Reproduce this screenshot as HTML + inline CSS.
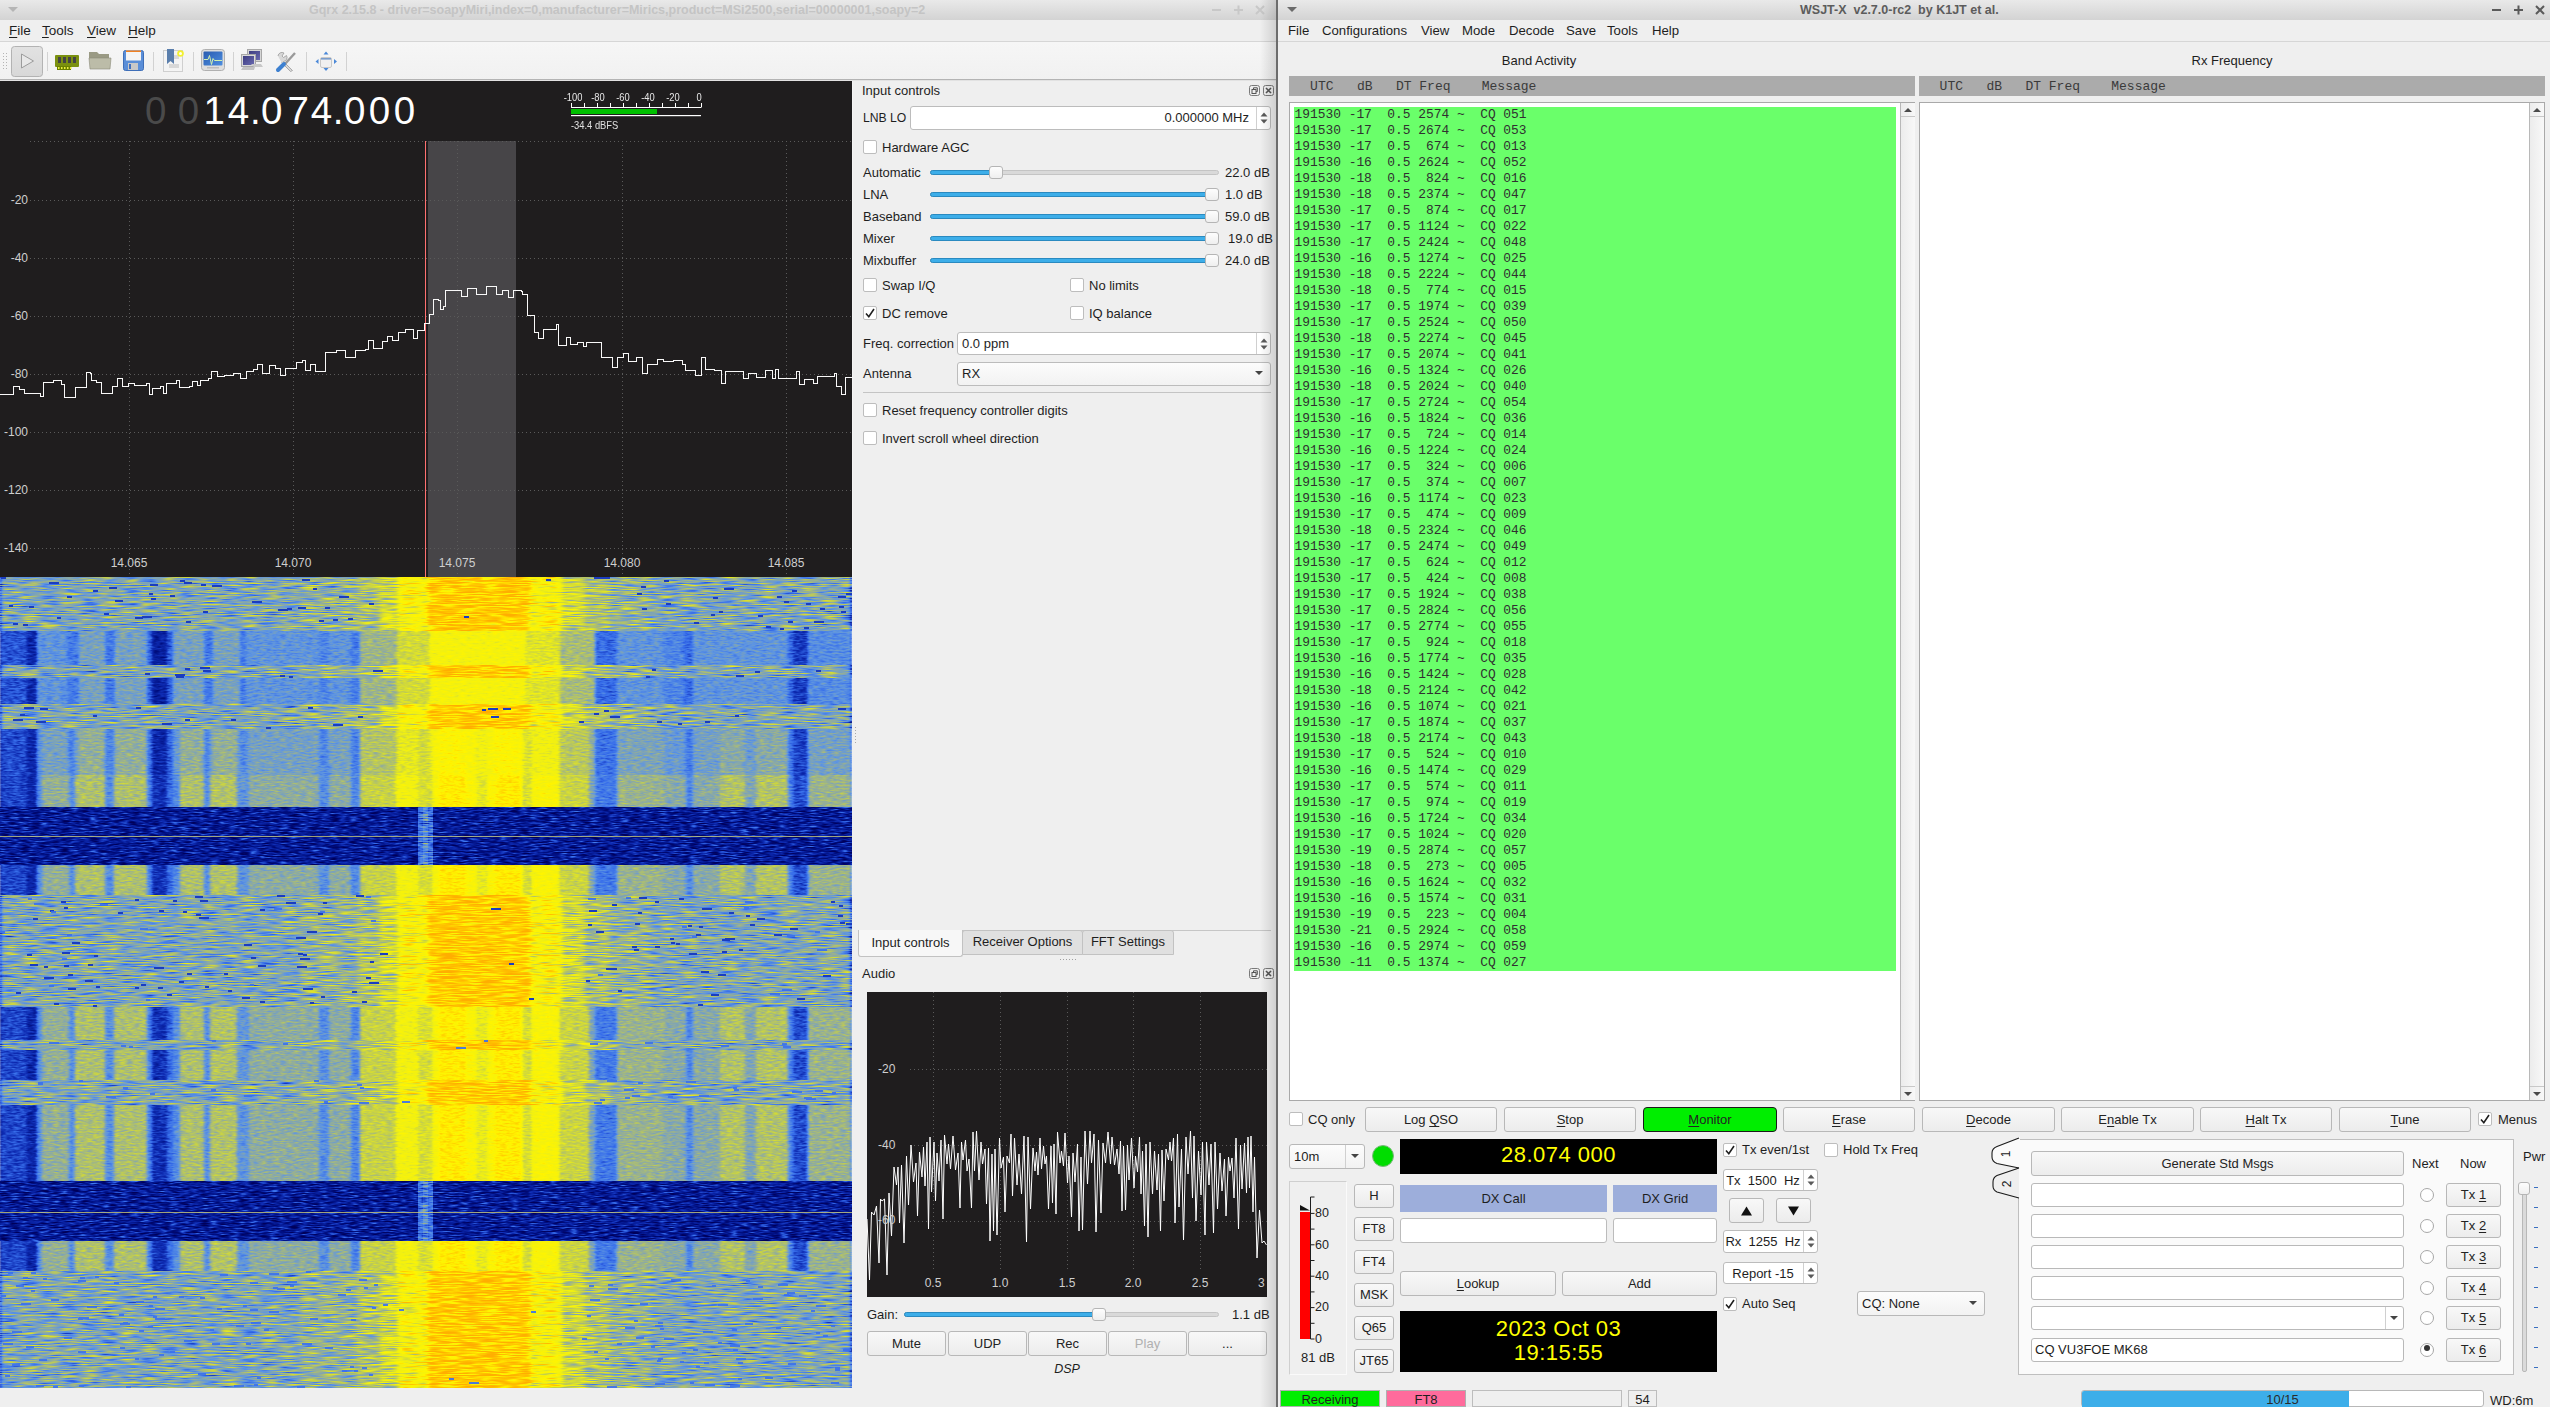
<!DOCTYPE html><html><head><meta charset="utf-8"><style>
*{margin:0;padding:0;box-sizing:border-box}
html,body{width:2550px;height:1407px;overflow:hidden;background:#efefef;position:relative;
font-family:"Liberation Sans",sans-serif;font-size:13px;color:#1e1e1e}
.a{position:absolute}
.t{position:absolute;white-space:pre;line-height:1}
.btn{position:absolute;border:1px solid #b8b8b8;border-radius:3px;background:linear-gradient(#f8f8f8,#ececec);
 text-align:center;white-space:pre;color:#232323}
.inp{position:absolute;border:1px solid #bcbcbc;border-radius:3px;background:#fff}
.cb{position:absolute;width:14px;height:14px;border:1px solid #bdbdbd;border-radius:2px;background:#fff}
.mono{font-family:"Liberation Mono",monospace}
</style></head><body><div class="a" style="left:0px;top:0px;width:1276px;height:20px;background:linear-gradient(#e9e9e9,#d3d3d3)"></div><svg class="a" style="left:7px;top:6px" width="12" height="8"><path d="M1 1h10l-5 5z" fill="#b5b5b5"/></svg><div class="t" style="left:309px;top:4px;font-size:12.5px;font-weight:bold;color:#c4c4c4">Gqrx 2.15.8 - driver=soapyMiri,index=0,manufacturer=Mirics,product=MSi2500,serial=00000001,soapy=2</div><svg class="a" style="left:1208px;top:3px" width="66" height="14"><path d="M4 7h9" stroke="#c8c8c8" stroke-width="2"/><path d="M26 7h9M30.5 2.5v9" stroke="#c8c8c8" stroke-width="2"/><path d="M48 3l8 8M56 3l-8 8" stroke="#c8c8c8" stroke-width="2"/></svg><div class="a" style="left:0px;top:20px;width:1276px;height:21px;background:#efefef"></div><div class="a" style="left:0px;top:41px;width:1276px;height:1px;background:#d6d6d6"></div><div class="t" style="left:9px;top:24px;font-size:13.5px"><u style="text-decoration-thickness:1px;text-underline-offset:2px">F</u>ile</div><div class="t" style="left:42px;top:24px;font-size:13.5px"><u style="text-decoration-thickness:1px;text-underline-offset:2px">T</u>ools</div><div class="t" style="left:87px;top:24px;font-size:13.5px"><u style="text-decoration-thickness:1px;text-underline-offset:2px">V</u>iew</div><div class="t" style="left:128px;top:24px;font-size:13.5px"><u style="text-decoration-thickness:1px;text-underline-offset:2px">H</u>elp</div><div class="a" style="left:0px;top:42px;width:1276px;height:38px;background:linear-gradient(#f6f6f6,#f1f1f1)"></div><div class="a" style="left:0px;top:79px;width:1276px;height:1px;background:#b4b4b4"></div><div class="a" style="left:0px;top:80px;width:1276px;height:1px;background:#e2e2e2"></div><svg class="a" style="left:0;top:42px" width="360" height="38" viewBox="0 42 360 38">
<defs>
<linearGradient id="gPlay" x1="0" y1="0" x2="0" y2="1"><stop offset="0" stop-color="#e2e2e2"/><stop offset="1" stop-color="#d8d8d8"/></linearGradient>
<linearGradient id="gScr" x1="0" y1="0" x2="1" y2="1"><stop offset="0" stop-color="#2a5cb0"/><stop offset="1" stop-color="#4d8ee0"/></linearGradient>
<linearGradient id="gScr2" x1="0" y1="0" x2="1" y2="1"><stop offset="0" stop-color="#3c3c80"/><stop offset="1" stop-color="#6a6ab0"/></linearGradient>
</defs>
<g fill="#b4b4b4"><rect x="3" y="53" width="1" height="1"/><rect x="3" y="56" width="1" height="1"/><rect x="3" y="59" width="1" height="1"/><rect x="3" y="62" width="1" height="1"/><rect x="3" y="65" width="1" height="1"/><rect x="3" y="68" width="1" height="1"/><rect x="6" y="53" width="1" height="1"/><rect x="6" y="56" width="1" height="1"/><rect x="6" y="59" width="1" height="1"/><rect x="6" y="62" width="1" height="1"/><rect x="6" y="65" width="1" height="1"/><rect x="6" y="68" width="1" height="1"/></g>
<rect x="11.5" y="46.5" width="31" height="30" rx="3" fill="url(#gPlay)" stroke="#b3b3b3"/>
<path d="M21.5 54v14l12-7z" fill="#e8e8e8" stroke="#9c9c9c" stroke-width="1"/>
<g fill="#d2d2d2"><rect x="47" y="52" width="1" height="19"/><rect x="153" y="52" width="1" height="19"/><rect x="193" y="52" width="1" height="19"/><rect x="233" y="52" width="1" height="19"/><rect x="306" y="52" width="1" height="19"/><rect x="346" y="52" width="1" height="19"/></g>
<rect x="55" y="55" width="24" height="12" rx="1" fill="#7a9010"/>
<rect x="57" y="66" width="14" height="4" fill="#6a8000"/>
<g fill="#444"><rect x="58" y="57" width="3" height="6"/><rect x="63" y="57" width="3" height="6"/><rect x="68" y="57" width="3" height="6"/><rect x="73" y="57" width="3" height="6"/></g>
<g fill="#e8f040"><rect x="58" y="67" width="1.5" height="2"/><rect x="61" y="67" width="1.5" height="2"/><rect x="64" y="67" width="1.5" height="2"/><rect x="67" y="67" width="1.5" height="2"/><rect x="70" y="67" width="1.5" height="2"/></g>
<path d="M89 52h8l2 2h10v6h-20z" fill="#9a9a84"/>
<path d="M89 58h22l-1 11h-20z" fill="#bcbca8" stroke="#8a8a78" stroke-width=".6"/>
<rect x="123.5" y="50.5" width="20" height="20" rx="2" fill="#5a8ed8" stroke="#3f6fb8"/>
<rect x="126" y="50.5" width="15" height="10" fill="#f4f4f4"/>
<rect x="126" y="50.5" width="15" height="1.5" fill="#f08020"/>
<rect x="128" y="63" width="10" height="7" fill="#c8c8c8"/><rect x="129" y="64" width="2" height="5" fill="#4070c0"/>
<rect x="163.5" y="50.5" width="19" height="21" fill="#f4f4f4" stroke="#cfcfcf"/>
<rect x="170" y="55" width="9" height="4" fill="#d8d8d8"/><rect x="169" y="64" width="10" height="4" fill="#d8d8d8"/>
<path d="M167 49h7v15l-3.5-3-3.5 3z" fill="#5a7eac"/>
<circle cx="180.5" cy="53.5" r="3.3" fill="#f2f030"/><circle cx="180.5" cy="53.5" r="1.5" fill="#fffff0"/>
<rect x="201.5" y="49.5" width="23" height="21" rx="3" fill="#dedede" stroke="#b0b0b0"/>
<rect x="203.5" y="51.5" width="19" height="14" rx="1" fill="url(#gScr)"/>
<path d="M204 59.5h4l1.5-4 2 9 1.5-6 1.5 2h7.5" fill="none" stroke="#d0f0b0" stroke-width="1"/>
<rect x="207" y="67" width="12" height="1.5" fill="#bdbdbd"/>
<rect x="247.5" y="49.5" width="14" height="12" fill="#d6d6d6" stroke="#a8a8a8"/><rect x="249" y="51" width="11" height="9" fill="url(#gScr2)"/>
<rect x="241.5" y="54.5" width="14" height="12" fill="#dadada" stroke="#a8a8a8"/><rect x="243" y="56" width="11" height="9" fill="url(#gScr2)"/>
<path d="M241 70l2-3h12l-1 3z" fill="#c4c4c4"/><path d="M251 64h10l2 3h-9z" fill="#c8c8c8"/>
<path d="M278 56a4 4 0 0 1 6-3l-2 3 1.5 1.5 3-2a4 4 0 0 1-3 6l9 9-2 1-9-9" fill="#d8d8d8" stroke="#9a9a9a" stroke-width=".8"/>
<path d="M295 53l-10 11" stroke="#9a9a9a" stroke-width="2.4"/>
<path d="M284 64l-6 6" stroke="#3d80d0" stroke-width="4" stroke-linecap="round"/>
<rect x="320.5" y="57.5" width="11" height="10" rx="1.5" fill="#f0f0f0" stroke="#c8c8c8"/><rect x="321" y="58" width="10" height="1.6" fill="#7a9ccc"/>
<g fill="#4a88d8"><path d="M326 51.5l2.5 3h-5z"/><path d="M326 71l2.5-3h-5z"/><path d="M315.5 61.5l3-2.5v5z"/><path d="M337 61.5l-3-2.5v5z"/></g>
</svg><div class="a" style="left:0px;top:81px;width:852px;height:496px;background:#1f1d1e"></div><div class="a" style="left:852px;top:81px;width:1px;height:496px;background:#f4f4f4"></div><svg class="a" style="left:0;top:81px" width="852" height="496" viewBox="0 81 852 496"><rect x="428" y="141" width="88" height="436" fill="#474548"/><path d="M30 141.5H852M30 200.5H852M30 258.5H852M30 316.5H852M30 374.5H852M30 432.5H852M30 490.5H852M30 548.5H852M129.5 141V577M293.5 141V577M457.5 141V577M622.5 141V577M786.5 141V577" stroke="#5a5a5a" stroke-width="1" stroke-dasharray="1 3" fill="none"/><rect x="425" y="141" width="1" height="436" fill="#ff7070"/><path d="M0 394.5H10.5V394.5H13.5V386.5H19.5V389.5H24.5V393.5H35.5V393.5H40.5V396.5H43.5V382.5H53.5V380.5H61.5V384.5H64.5V397.5H74.5V397.5H75.5V387.5H83.5V387.5H86.5V372.5H90.5V373.5H91.5V380.5H96.5V382.5H101.5V393.5H109.5V393.5H112.5V386.5H117.5V378.5H122.5V386.5H128.5V383.5H134.5V385.5H141.5V385.5H146.5V383.5H149.5V394.5H152.5V388.5H160.5V386.5H163.5V393.5H166.5V383.5H176.5V380.5H179.5V387.5H189.5V386.5H192.5V381.5H197.5V385.5H200.5V380.5H208.5V378.5H211.5V371.5H217.5V376.5H224.5V375.5H233.5V373.5H240.5V378.5H246.5V371.5H253.5V369.5H257.5V364.5H262.5V373.5H269.5V365.5H275.5V368.5H280.5V375.5H285.5V368.5H291.5V368.5H296.5V362.5H302.5V360.5H305.5V370.5H310.5V364.5H315.5V371.5H323.5V371.5H325.5V352.5H336.5V350.5H345.5V357.5H355.5V350.5H365.5V349.5H368.5V340.5H373.5V348.5H377.5V348.5H382.5V341.5H387.5V336.5H392.5V340.5H398.5V332.5H405.5V329.5H413.5V338.5H417.5V330.5H424.5V323.5H429.5V314.5H433.5V299.5H438.5V300.5H440.5V309.5H443.5V306.5H445.5V290.5H454.5V290.5H461.5V296.5H467.5V288.5H476.5V294.5H486.5V286.5H496.5V294.5H502.5V290.5H508.5V297.5H513.5V290.5H521.5V291.5H522.5V294.5H527.5V315.5H534.5V332.5H538.5V338.5H543.5V329.5H556.5V324.5H558.5V345.5H566.5V337.5H570.5V344.5H577.5V342.5H583.5V346.5H586.5V342.5H599.5V342.5H601.5V357.5H609.5V357.5H612.5V367.5H617.5V357.5H623.5V353.5H628.5V361.5H636.5V357.5H642.5V373.5H647.5V364.5H657.5V359.5H663.5V361.5H673.5V360.5H682.5V364.5H685.5V370.5H695.5V375.5H701.5V357.5H705.5V369.5H714.5V370.5H721.5V383.5H725.5V371.5H740.5V371.5H743.5V378.5H748.5V373.5H756.5V377.5H765.5V370.5H772.5V378.5H775.5V369.5H778.5V378.5H788.5V378.5H796.5V371.5H799.5V384.5H804.5V379.5H813.5V383.5H817.5V376.5H829.5V376.5H834.5V373.5H836.5V386.5H841.5V394.5H845.5V377.5H852.5V383.5H860.5V386.5H852" fill="none" stroke="#f8f8f8" stroke-width="1" shape-rendering="crispEdges"/></svg><div class="t" style="left:0;width:28px;text-align:right;top:194px;font-size:12px;color:#cfcfcf">-20</div><div class="t" style="left:0;width:28px;text-align:right;top:252px;font-size:12px;color:#cfcfcf">-40</div><div class="t" style="left:0;width:28px;text-align:right;top:310px;font-size:12px;color:#cfcfcf">-60</div><div class="t" style="left:0;width:28px;text-align:right;top:368px;font-size:12px;color:#cfcfcf">-80</div><div class="t" style="left:0;width:28px;text-align:right;top:426px;font-size:12px;color:#cfcfcf">-100</div><div class="t" style="left:0;width:28px;text-align:right;top:484px;font-size:12px;color:#cfcfcf">-120</div><div class="t" style="left:0;width:28px;text-align:right;top:542px;font-size:12px;color:#cfcfcf">-140</div><div class="t" style="left:99px;width:60px;text-align:center;top:557px;font-size:12px;color:#cfcfcf">14.065</div><div class="t" style="left:263px;width:60px;text-align:center;top:557px;font-size:12px;color:#cfcfcf">14.070</div><div class="t" style="left:427px;width:60px;text-align:center;top:557px;font-size:12px;color:#cfcfcf">14.075</div><div class="t" style="left:592px;width:60px;text-align:center;top:557px;font-size:12px;color:#cfcfcf">14.080</div><div class="t" style="left:756px;width:60px;text-align:center;top:557px;font-size:12px;color:#cfcfcf">14.085</div><div class="t" style="left:135.6px;width:40px;text-align:center;top:92px;font-size:38.5px;color:#4a4a4a">0</div><div class="t" style="left:168.5px;width:40px;text-align:center;top:92px;font-size:38.5px;color:#4a4a4a">0</div><div class="t" style="left:194.1px;width:40px;text-align:center;top:92px;font-size:38.5px;color:#fff">1</div><div class="t" style="left:218.5px;width:40px;text-align:center;top:92px;font-size:38.5px;color:#fff">4</div><div class="t" style="left:235.3px;width:40px;text-align:center;top:92px;font-size:38.5px;color:#fff">.</div><div class="t" style="left:251.8px;width:40px;text-align:center;top:92px;font-size:38.5px;color:#fff">0</div><div class="t" style="left:278.3px;width:40px;text-align:center;top:92px;font-size:38.5px;color:#fff">7</div><div class="t" style="left:301.5px;width:40px;text-align:center;top:92px;font-size:38.5px;color:#fff">4</div><div class="t" style="left:318.2px;width:40px;text-align:center;top:92px;font-size:38.5px;color:#fff">.</div><div class="t" style="left:334.7px;width:40px;text-align:center;top:92px;font-size:38.5px;color:#fff">0</div><div class="t" style="left:359.4px;width:40px;text-align:center;top:92px;font-size:38.5px;color:#fff">0</div><div class="t" style="left:384.4px;width:40px;text-align:center;top:92px;font-size:38.5px;color:#fff">0</div><svg class="a" style="left:560px;top:88px" width="150" height="45" viewBox="560 88 150 45"><path d="M571 107.5H701.5M571.5 103V107M584.5 103V107M597.5 103V107M610.5 103V107M623.5 103V107M636.5 103V107M649.5 103V107M662.5 103V107M675.5 103V107M688.5 103V107M701.5 103V107" stroke="#fff" stroke-width="1" fill="none"/><rect x="571" y="109" width="86" height="5" fill="#00c000"/><rect x="571" y="115" width="130" height="1.2" fill="#fff"/></svg><div class="t" style="left:558px;width:30px;text-align:center;top:92px;font-size:11px;color:#e8e8e8;transform:scaleX(.85)">-100</div><div class="t" style="left:583px;width:30px;text-align:center;top:92px;font-size:11px;color:#e8e8e8;transform:scaleX(.85)">-80</div><div class="t" style="left:608px;width:30px;text-align:center;top:92px;font-size:11px;color:#e8e8e8;transform:scaleX(.85)">-60</div><div class="t" style="left:633px;width:30px;text-align:center;top:92px;font-size:11px;color:#e8e8e8;transform:scaleX(.85)">-40</div><div class="t" style="left:658px;width:30px;text-align:center;top:92px;font-size:11px;color:#e8e8e8;transform:scaleX(.85)">-20</div><div class="t" style="left:684px;width:30px;text-align:center;top:92px;font-size:11px;color:#e8e8e8;transform:scaleX(.85)">0</div><div class="t" style="left:571px;top:120px;font-size:11px;color:#e0e0e0;transform-origin:0 0;transform:scaleX(.85)">-34.4 dBFS</div><svg class="a" style="left:0;top:577px" width="852" height="811" viewBox="0 577 852 811"><defs><linearGradient id="pB" x1="0" y1="0" x2="852" y2="0" gradientUnits="userSpaceOnUse"><stop offset="0.0000" stop-color="#3d3d3d"/><stop offset="0.0317" stop-color="#3d3d3d"/><stop offset="0.0317" stop-color="#2d2d2d"/><stop offset="0.0434" stop-color="#2d2d2d"/><stop offset="0.0434" stop-color="#606060"/><stop offset="0.0493" stop-color="#606060"/><stop offset="0.0493" stop-color="#7f7f7f"/><stop offset="0.0810" stop-color="#7f7f7f"/><stop offset="0.0810" stop-color="#606060"/><stop offset="0.0880" stop-color="#606060"/><stop offset="0.0880" stop-color="#8c8c8c"/><stop offset="0.1232" stop-color="#8c8c8c"/><stop offset="0.1232" stop-color="#606060"/><stop offset="0.1338" stop-color="#606060"/><stop offset="0.1338" stop-color="#8c8c8c"/><stop offset="0.1725" stop-color="#8c8c8c"/><stop offset="0.1725" stop-color="#565656"/><stop offset="0.1784" stop-color="#565656"/><stop offset="0.1784" stop-color="#333333"/><stop offset="0.1960" stop-color="#333333"/><stop offset="0.1960" stop-color="#4c4c4c"/><stop offset="0.2031" stop-color="#4c4c4c"/><stop offset="0.2031" stop-color="#606060"/><stop offset="0.2113" stop-color="#606060"/><stop offset="0.2113" stop-color="#8c8c8c"/><stop offset="0.2394" stop-color="#8c8c8c"/><stop offset="0.2394" stop-color="#606060"/><stop offset="0.2465" stop-color="#606060"/><stop offset="0.2465" stop-color="#8e8e8e"/><stop offset="0.2782" stop-color="#8e8e8e"/><stop offset="0.2782" stop-color="#666666"/><stop offset="0.2923" stop-color="#666666"/><stop offset="0.2923" stop-color="#7c7c7c"/><stop offset="0.3744" stop-color="#7c7c7c"/><stop offset="0.3744" stop-color="#606060"/><stop offset="0.3862" stop-color="#606060"/><stop offset="0.3862" stop-color="#7c7c7c"/><stop offset="0.4120" stop-color="#7c7c7c"/><stop offset="0.4120" stop-color="#5b5b5b"/><stop offset="0.4225" stop-color="#5b5b5b"/><stop offset="0.4225" stop-color="#999999"/><stop offset="0.4648" stop-color="#999999"/><stop offset="0.4648" stop-color="#b7b7b7"/><stop offset="0.4906" stop-color="#b7b7b7"/><stop offset="0.4906" stop-color="#a3a3a3"/><stop offset="0.5082" stop-color="#a3a3a3"/><stop offset="0.5082" stop-color="#c1c1c1"/><stop offset="0.5153" stop-color="#c1c1c1"/><stop offset="0.5153" stop-color="#d1d1d1"/><stop offset="0.5469" stop-color="#d1d1d1"/><stop offset="0.5469" stop-color="#c4c4c4"/><stop offset="0.5587" stop-color="#c4c4c4"/><stop offset="0.5587" stop-color="#adadad"/><stop offset="0.5728" stop-color="#adadad"/><stop offset="0.5728" stop-color="#c4c4c4"/><stop offset="0.5810" stop-color="#c4c4c4"/><stop offset="0.5810" stop-color="#d1d1d1"/><stop offset="0.6127" stop-color="#d1d1d1"/><stop offset="0.6127" stop-color="#a3a3a3"/><stop offset="0.6244" stop-color="#a3a3a3"/><stop offset="0.6244" stop-color="#c1c1c1"/><stop offset="0.6561" stop-color="#c1c1c1"/><stop offset="0.6561" stop-color="#9b9b9b"/><stop offset="0.6913" stop-color="#9b9b9b"/><stop offset="0.6913" stop-color="#757575"/><stop offset="0.6984" stop-color="#757575"/><stop offset="0.6984" stop-color="#545454"/><stop offset="0.7242" stop-color="#545454"/><stop offset="0.7242" stop-color="#828282"/><stop offset="0.7793" stop-color="#828282"/><stop offset="0.7793" stop-color="#7a7a7a"/><stop offset="0.8052" stop-color="#7a7a7a"/><stop offset="0.8052" stop-color="#5b5b5b"/><stop offset="0.8134" stop-color="#5b5b5b"/><stop offset="0.8134" stop-color="#7a7a7a"/><stop offset="0.8451" stop-color="#7a7a7a"/><stop offset="0.8451" stop-color="#8e8e8e"/><stop offset="0.8744" stop-color="#8e8e8e"/><stop offset="0.8744" stop-color="#757575"/><stop offset="0.8873" stop-color="#757575"/><stop offset="0.8873" stop-color="#8e8e8e"/><stop offset="0.9249" stop-color="#8e8e8e"/><stop offset="0.9249" stop-color="#595959"/><stop offset="0.9308" stop-color="#595959"/><stop offset="0.9308" stop-color="#3f3f3f"/><stop offset="0.9484" stop-color="#3f3f3f"/><stop offset="0.9484" stop-color="#828282"/><stop offset="1.0000" stop-color="#828282"/></linearGradient><linearGradient id="pD" x1="0" y1="0" x2="852" y2="0" gradientUnits="userSpaceOnUse"><stop offset="0.0000" stop-color="#424242"/><stop offset="0.0317" stop-color="#424242"/><stop offset="0.0317" stop-color="#2d2d2d"/><stop offset="0.0434" stop-color="#2d2d2d"/><stop offset="0.0434" stop-color="#666666"/><stop offset="0.0786" stop-color="#666666"/><stop offset="0.0786" stop-color="#545454"/><stop offset="0.0927" stop-color="#545454"/><stop offset="0.0927" stop-color="#727272"/><stop offset="0.1232" stop-color="#727272"/><stop offset="0.1232" stop-color="#545454"/><stop offset="0.1350" stop-color="#545454"/><stop offset="0.1350" stop-color="#727272"/><stop offset="0.1725" stop-color="#727272"/><stop offset="0.1725" stop-color="#474747"/><stop offset="0.1784" stop-color="#474747"/><stop offset="0.1784" stop-color="#282828"/><stop offset="0.1960" stop-color="#282828"/><stop offset="0.1960" stop-color="#474747"/><stop offset="0.2031" stop-color="#474747"/><stop offset="0.2031" stop-color="#727272"/><stop offset="0.2394" stop-color="#727272"/><stop offset="0.2394" stop-color="#545454"/><stop offset="0.2500" stop-color="#545454"/><stop offset="0.2500" stop-color="#727272"/><stop offset="0.2817" stop-color="#727272"/><stop offset="0.2817" stop-color="#565656"/><stop offset="0.2887" stop-color="#565656"/><stop offset="0.2887" stop-color="#666666"/><stop offset="0.3744" stop-color="#666666"/><stop offset="0.3744" stop-color="#5b5b5b"/><stop offset="0.3862" stop-color="#5b5b5b"/><stop offset="0.3862" stop-color="#666666"/><stop offset="0.4120" stop-color="#666666"/><stop offset="0.4120" stop-color="#565656"/><stop offset="0.4225" stop-color="#565656"/><stop offset="0.4225" stop-color="#848484"/><stop offset="0.4660" stop-color="#848484"/><stop offset="0.4660" stop-color="#a0a0a0"/><stop offset="0.5047" stop-color="#a0a0a0"/><stop offset="0.5047" stop-color="#bcbcbc"/><stop offset="0.6162" stop-color="#bcbcbc"/><stop offset="0.6162" stop-color="#a8a8a8"/><stop offset="0.6573" stop-color="#a8a8a8"/><stop offset="0.6573" stop-color="#898989"/><stop offset="0.6984" stop-color="#898989"/><stop offset="0.6984" stop-color="#4c4c4c"/><stop offset="0.7242" stop-color="#4c4c4c"/><stop offset="0.7242" stop-color="#666666"/><stop offset="0.7793" stop-color="#666666"/><stop offset="0.7793" stop-color="#5b5b5b"/><stop offset="0.8028" stop-color="#5b5b5b"/><stop offset="0.8028" stop-color="#4c4c4c"/><stop offset="0.8134" stop-color="#4c4c4c"/><stop offset="0.8134" stop-color="#666666"/><stop offset="0.9249" stop-color="#666666"/><stop offset="0.9249" stop-color="#4c4c4c"/><stop offset="0.9308" stop-color="#4c4c4c"/><stop offset="0.9308" stop-color="#383838"/><stop offset="0.9484" stop-color="#383838"/><stop offset="0.9484" stop-color="#606060"/><stop offset="1.0000" stop-color="#606060"/></linearGradient><linearGradient id="pN" x1="0" y1="0" x2="852" y2="0" gradientUnits="userSpaceOnUse"><stop offset="0.0000" stop-color="#757575"/><stop offset="0.3521" stop-color="#757575"/><stop offset="0.3521" stop-color="#7f7f7f"/><stop offset="0.4190" stop-color="#7f7f7f"/><stop offset="0.4190" stop-color="#8c8c8c"/><stop offset="0.4460" stop-color="#8c8c8c"/><stop offset="0.4460" stop-color="#9e9e9e"/><stop offset="0.4671" stop-color="#9e9e9e"/><stop offset="0.4671" stop-color="#bfbfbf"/><stop offset="0.5023" stop-color="#bfbfbf"/><stop offset="0.5023" stop-color="#e5e5e5"/><stop offset="0.6221" stop-color="#e5e5e5"/><stop offset="0.6221" stop-color="#bfbfbf"/><stop offset="0.6596" stop-color="#bfbfbf"/><stop offset="0.6596" stop-color="#9e9e9e"/><stop offset="0.6866" stop-color="#9e9e9e"/><stop offset="0.6866" stop-color="#8c8c8c"/><stop offset="0.7160" stop-color="#8c8c8c"/><stop offset="0.7160" stop-color="#7f7f7f"/><stop offset="0.7629" stop-color="#7f7f7f"/><stop offset="0.7629" stop-color="#757575"/><stop offset="1.0000" stop-color="#757575"/></linearGradient><linearGradient id="pM" x1="0" y1="0" x2="852" y2="0" gradientUnits="userSpaceOnUse"><stop offset="0.0000" stop-color="#3f3f3f"/><stop offset="0.0317" stop-color="#3f3f3f"/><stop offset="0.0317" stop-color="#2d2d2d"/><stop offset="0.0434" stop-color="#2d2d2d"/><stop offset="0.0434" stop-color="#636363"/><stop offset="0.0493" stop-color="#636363"/><stop offset="0.0493" stop-color="#727272"/><stop offset="0.0786" stop-color="#727272"/><stop offset="0.0786" stop-color="#696969"/><stop offset="0.0810" stop-color="#696969"/><stop offset="0.0810" stop-color="#5a5a5a"/><stop offset="0.0880" stop-color="#5a5a5a"/><stop offset="0.0880" stop-color="#707070"/><stop offset="0.0927" stop-color="#707070"/><stop offset="0.0927" stop-color="#7f7f7f"/><stop offset="0.1232" stop-color="#7f7f7f"/><stop offset="0.1232" stop-color="#5a5a5a"/><stop offset="0.1338" stop-color="#5a5a5a"/><stop offset="0.1338" stop-color="#707070"/><stop offset="0.1350" stop-color="#707070"/><stop offset="0.1350" stop-color="#7f7f7f"/><stop offset="0.1725" stop-color="#7f7f7f"/><stop offset="0.1725" stop-color="#4f4f4f"/><stop offset="0.1784" stop-color="#4f4f4f"/><stop offset="0.1784" stop-color="#2d2d2d"/><stop offset="0.1960" stop-color="#2d2d2d"/><stop offset="0.1960" stop-color="#494949"/><stop offset="0.2031" stop-color="#494949"/><stop offset="0.2031" stop-color="#696969"/><stop offset="0.2113" stop-color="#696969"/><stop offset="0.2113" stop-color="#7f7f7f"/><stop offset="0.2394" stop-color="#7f7f7f"/><stop offset="0.2394" stop-color="#5a5a5a"/><stop offset="0.2465" stop-color="#5a5a5a"/><stop offset="0.2465" stop-color="#717171"/><stop offset="0.2500" stop-color="#717171"/><stop offset="0.2500" stop-color="#808080"/><stop offset="0.2782" stop-color="#808080"/><stop offset="0.2782" stop-color="#6c6c6c"/><stop offset="0.2817" stop-color="#6c6c6c"/><stop offset="0.2817" stop-color="#5e5e5e"/><stop offset="0.2887" stop-color="#5e5e5e"/><stop offset="0.2887" stop-color="#666666"/><stop offset="0.2923" stop-color="#666666"/><stop offset="0.2923" stop-color="#717171"/><stop offset="0.3744" stop-color="#717171"/><stop offset="0.3744" stop-color="#5e5e5e"/><stop offset="0.3862" stop-color="#5e5e5e"/><stop offset="0.3862" stop-color="#717171"/><stop offset="0.4120" stop-color="#717171"/><stop offset="0.4120" stop-color="#595959"/><stop offset="0.4225" stop-color="#595959"/><stop offset="0.4225" stop-color="#8e8e8e"/><stop offset="0.4648" stop-color="#8e8e8e"/><stop offset="0.4648" stop-color="#9e9e9e"/><stop offset="0.4660" stop-color="#9e9e9e"/><stop offset="0.4660" stop-color="#acacac"/><stop offset="0.4906" stop-color="#acacac"/><stop offset="0.4906" stop-color="#a1a1a1"/><stop offset="0.5047" stop-color="#a1a1a1"/><stop offset="0.5047" stop-color="#afafaf"/><stop offset="0.5082" stop-color="#afafaf"/><stop offset="0.5082" stop-color="#bfbfbf"/><stop offset="0.5153" stop-color="#bfbfbf"/><stop offset="0.5153" stop-color="#c6c6c6"/><stop offset="0.5469" stop-color="#c6c6c6"/><stop offset="0.5469" stop-color="#c0c0c0"/><stop offset="0.5587" stop-color="#c0c0c0"/><stop offset="0.5587" stop-color="#b5b5b5"/><stop offset="0.5728" stop-color="#b5b5b5"/><stop offset="0.5728" stop-color="#c0c0c0"/><stop offset="0.5810" stop-color="#c0c0c0"/><stop offset="0.5810" stop-color="#c6c6c6"/><stop offset="0.6127" stop-color="#c6c6c6"/><stop offset="0.6127" stop-color="#afafaf"/><stop offset="0.6162" stop-color="#afafaf"/><stop offset="0.6162" stop-color="#a5a5a5"/><stop offset="0.6244" stop-color="#a5a5a5"/><stop offset="0.6244" stop-color="#b5b5b5"/><stop offset="0.6561" stop-color="#b5b5b5"/><stop offset="0.6561" stop-color="#a1a1a1"/><stop offset="0.6573" stop-color="#a1a1a1"/><stop offset="0.6573" stop-color="#929292"/><stop offset="0.6913" stop-color="#929292"/><stop offset="0.6913" stop-color="#7f7f7f"/><stop offset="0.6984" stop-color="#7f7f7f"/><stop offset="0.6984" stop-color="#505050"/><stop offset="0.7242" stop-color="#505050"/><stop offset="0.7242" stop-color="#747474"/><stop offset="0.7793" stop-color="#747474"/><stop offset="0.7793" stop-color="#6b6b6b"/><stop offset="0.8028" stop-color="#6b6b6b"/><stop offset="0.8028" stop-color="#636363"/><stop offset="0.8052" stop-color="#636363"/><stop offset="0.8052" stop-color="#545454"/><stop offset="0.8134" stop-color="#545454"/><stop offset="0.8134" stop-color="#707070"/><stop offset="0.8451" stop-color="#707070"/><stop offset="0.8451" stop-color="#7a7a7a"/><stop offset="0.8744" stop-color="#7a7a7a"/><stop offset="0.8744" stop-color="#6d6d6d"/><stop offset="0.8873" stop-color="#6d6d6d"/><stop offset="0.8873" stop-color="#7a7a7a"/><stop offset="0.9249" stop-color="#7a7a7a"/><stop offset="0.9249" stop-color="#525252"/><stop offset="0.9308" stop-color="#525252"/><stop offset="0.9308" stop-color="#3b3b3b"/><stop offset="0.9484" stop-color="#3b3b3b"/><stop offset="0.9484" stop-color="#717171"/><stop offset="1.0000" stop-color="#717171"/></linearGradient><linearGradient id="pK" x1="0" y1="0" x2="852" y2="0" gradientUnits="userSpaceOnUse"><stop offset="0.0000" stop-color="#232323"/><stop offset="0.4906" stop-color="#232323"/><stop offset="0.4906" stop-color="#515151"/><stop offset="0.4965" stop-color="#515151"/><stop offset="0.4965" stop-color="#606060"/><stop offset="0.5023" stop-color="#606060"/><stop offset="0.5023" stop-color="#515151"/><stop offset="0.5082" stop-color="#515151"/><stop offset="0.5082" stop-color="#232323"/><stop offset="1.0000" stop-color="#232323"/></linearGradient><filter id="fN" x="0" y="0" width="100%" height="100%" color-interpolation-filters="sRGB"><feTurbulence type="fractalNoise" baseFrequency="0.05 0.9" numOctaves="2" seed="3" result="n"/><feColorMatrix in="n" type="matrix" values="1 0 0 0 0 1 0 0 0 0 1 0 0 0 0 0 0 0 0 1" result="g"/><feGaussianBlur in="SourceGraphic" stdDeviation="2 0" result="b"/><feComposite in="b" in2="g" operator="arithmetic" k1="0" k2="1" k3="0.62" k4="-0.31" result="s"/><feComponentTransfer in="s"><feFuncR type="table" tableValues="0.000 0.000 0.059 0.216 0.373 0.588 0.784 0.941 1.000 1.000 1.000"/><feFuncG type="table" tableValues="0.000 0.059 0.176 0.431 0.588 0.686 0.824 0.941 0.961 0.784 0.686"/><feFuncB type="table" tableValues="0.353 0.510 0.706 0.922 0.882 0.588 0.275 0.078 0.000 0.000 0.000"/><feFuncA type="identity"/></feComponentTransfer></filter><filter id="fP" x="0" y="0" width="100%" height="100%" color-interpolation-filters="sRGB"><feTurbulence type="fractalNoise" baseFrequency="0.15 0.6" numOctaves="2" seed="5" result="n"/><feColorMatrix in="n" type="matrix" values="1 0 0 0 0 1 0 0 0 0 1 0 0 0 0 0 0 0 0 1" result="g"/><feGaussianBlur in="SourceGraphic" stdDeviation="1.5 0" result="b"/><feComposite in="b" in2="g" operator="arithmetic" k1="0" k2="1" k3="0.22" k4="-0.11" result="s"/><feComponentTransfer in="s"><feFuncR type="table" tableValues="0.000 0.000 0.059 0.216 0.373 0.588 0.784 0.941 1.000 1.000 1.000"/><feFuncG type="table" tableValues="0.000 0.059 0.176 0.431 0.588 0.686 0.824 0.941 0.961 0.784 0.686"/><feFuncB type="table" tableValues="0.353 0.510 0.706 0.922 0.882 0.588 0.275 0.078 0.000 0.000 0.000"/><feFuncA type="identity"/></feComponentTransfer></filter><filter id="fK" x="0" y="0" width="100%" height="100%" color-interpolation-filters="sRGB"><feTurbulence type="fractalNoise" baseFrequency="0.1 0.8" numOctaves="2" seed="9" result="n"/><feColorMatrix in="n" type="matrix" values="1 0 0 0 0 1 0 0 0 0 1 0 0 0 0 0 0 0 0 1" result="g"/><feGaussianBlur in="SourceGraphic" stdDeviation="0 0" result="b"/><feComposite in="b" in2="g" operator="arithmetic" k1="0" k2="1" k3="0.55" k4="-0.275" result="s"/><feComponentTransfer in="s"><feFuncR type="table" tableValues="0.000 0.000 0.059 0.216 0.373 0.588 0.784 0.941 1.000 1.000 1.000"/><feFuncG type="table" tableValues="0.000 0.059 0.176 0.431 0.588 0.686 0.824 0.941 0.961 0.784 0.686"/><feFuncB type="table" tableValues="0.353 0.510 0.706 0.922 0.882 0.588 0.275 0.078 0.000 0.000 0.000"/><feFuncA type="identity"/></feComponentTransfer></filter></defs><rect x="0" y="577" width="852" height="54" fill="url(#pN)" filter="url(#fN)"/><rect x="0" y="631" width="852" height="34" fill="url(#pD)" filter="url(#fP)"/><rect x="0" y="665" width="852" height="13" fill="url(#pN)" filter="url(#fN)"/><rect x="0" y="678" width="852" height="26" fill="url(#pD)" filter="url(#fP)"/><rect x="0" y="704" width="852" height="25" fill="url(#pN)" filter="url(#fN)"/><rect x="0" y="729" width="852" height="46" fill="url(#pM)" filter="url(#fP)"/><rect x="0" y="775" width="852" height="32" fill="url(#pB)" filter="url(#fP)"/><rect x="0" y="807" width="852" height="58" fill="url(#pK)" filter="url(#fK)"/><rect x="0" y="865" width="852" height="30" fill="url(#pB)" filter="url(#fP)"/><rect x="0" y="895" width="852" height="112" fill="url(#pN)" filter="url(#fN)"/><rect x="0" y="1007" width="852" height="33" fill="url(#pB)" filter="url(#fP)"/><rect x="0" y="1040" width="852" height="10" fill="url(#pN)" filter="url(#fN)"/><rect x="0" y="1050" width="852" height="30" fill="url(#pB)" filter="url(#fP)"/><rect x="0" y="1080" width="852" height="25" fill="url(#pN)" filter="url(#fN)"/><rect x="0" y="1105" width="852" height="76" fill="url(#pB)" filter="url(#fP)"/><rect x="0" y="1181" width="852" height="60" fill="url(#pK)" filter="url(#fK)"/><rect x="0" y="1241" width="852" height="30" fill="url(#pB)" filter="url(#fP)"/><rect x="0" y="1271" width="852" height="117" fill="url(#pN)" filter="url(#fN)"/><path d="M637 593h5v2h-5zM814 621h10v2h-10zM29 606h5v2h-5zM664 580h5v2h-5zM115 600h8v2h-8zM252 601h10v2h-10zM104 613h5v2h-5zM13 623h5v2h-5zM784 601h5v2h-5zM780 628h4v2h-4zM142 616h10v2h-10zM1 577h5v2h-5zM792 590h5v2h-5zM170 595h5v2h-5zM203 611h5v2h-5zM186 621h5v2h-5zM369 603h5v2h-5zM149 593h4v2h-4zM339 596h10v2h-10zM600 577h10v2h-10zM694 622h5v2h-5zM67 596h5v2h-5zM838 596h8v2h-8zM713 597h5v2h-5zM180 580h5v2h-5zM23 624h5v2h-5zM806 603h5v2h-5zM9 605h4v2h-4zM724 588h10v2h-10zM201 584h5v2h-5zM839 606h5v2h-5zM766 626h5v2h-5zM302 579h8v2h-8zM93 590h5v2h-5zM151 598h5v2h-5zM719 611h4v2h-4zM319 620h5v2h-5zM313 588h4v2h-4zM641 586h5v2h-5zM49 582h10v2h-10zM546 579h5v2h-5zM758 615h5v2h-5zM846 593h8v2h-8zM666 603h5v2h-5zM57 617h4v2h-4zM820 608h5v2h-5zM212 585h10v2h-10zM135 617h8v2h-8zM109 587h8v2h-8zM464 616h5v2h-5zM325 607h5v2h-5zM298 607h8v2h-8zM150 584h8v2h-8zM841 611h5v2h-5zM642 608h5v2h-5zM184 582h8v2h-8zM278 609h10v2h-10zM804 627h5v2h-5zM711 614h4v2h-4zM777 596h5v2h-5zM287 608h5v2h-5zM788 621h5v2h-5zM348 618h5v2h-5zM594 577h8v2h-8zM333 619h5v2h-5zM816 670h5v2h-5zM280 675h5v2h-5zM755 671h5v2h-5zM176 676h8v2h-8zM373 670h10v2h-10zM145 673h5v2h-5zM203 670h8v2h-8zM289 676h4v2h-4zM736 675h8v2h-8zM175 674h10v2h-10zM652 669h4v2h-4zM200 667h10v2h-10zM185 668h5v2h-5zM646 676h4v2h-4zM482 709h4v2h-4zM136 707h5v2h-5zM185 719h5v2h-5zM678 723h4v2h-4zM604 710h5v2h-5zM735 715h4v2h-4zM358 716h5v2h-5zM705 721h5v2h-5zM36 721h10v2h-10zM308 707h5v2h-5zM594 713h5v2h-5zM838 708h8v2h-8zM657 721h5v2h-5zM610 716h10v2h-10zM488 708h10v2h-10zM93 715h4v2h-4zM579 721h5v2h-5zM333 724h10v2h-10zM231 719h5v2h-5zM491 716h8v2h-8zM162 723h10v2h-10zM266 727h5v2h-5zM20 714h5v2h-5zM503 708h8v2h-8zM24 707h10v2h-10zM40 708h8v2h-8zM13 719h10v2h-10zM251 957h5v2h-5zM158 987h5v2h-5zM300 958h10v2h-10zM618 990h4v2h-4zM16 992h5v2h-5zM307 931h10v2h-10zM725 938h10v2h-10zM303 988h10v2h-10zM27 954h5v2h-5zM369 982h10v2h-10zM135 899h4v2h-4zM258 965h8v2h-8zM702 908h10v2h-10zM195 896h8v2h-8zM797 998h8v2h-8zM609 968h8v2h-8zM698 1004h5v2h-5zM303 954h4v2h-4zM310 1002h4v2h-4zM711 994h8v2h-8zM596 931h8v2h-8zM318 913h5v2h-5zM509 963h5v2h-5zM831 901h4v2h-4zM750 924h5v2h-5zM839 905h4v2h-4zM679 898h5v2h-5zM739 949h4v2h-4zM50 910h4v2h-4zM224 973h4v2h-4zM729 912h5v2h-5zM722 951h5v2h-5zM187 973h5v2h-5zM68 974h5v2h-5zM44 966h4v2h-4zM676 943h4v2h-4zM286 902h10v2h-10zM589 910h8v2h-8zM638 912h4v2h-4zM701 971h8v2h-8zM671 942h4v2h-4zM141 984h5v2h-5zM154 967h10v2h-10zM297 966h10v2h-10zM635 923h5v2h-5zM64 965h5v2h-5zM260 1001h5v2h-5zM529 998h5v2h-5zM380 953h8v2h-8zM183 911h4v2h-4zM670 938h4v2h-4zM586 980h4v2h-4zM93 1005h4v2h-4zM244 944h8v2h-8zM491 908h10v2h-10zM30 964h8v2h-8zM54 1003h5v2h-5zM228 990h4v2h-4zM85 980h8v2h-8zM840 922h5v2h-5zM718 974h8v2h-8zM362 1001h5v2h-5zM296 937h10v2h-10zM722 939h8v2h-8zM366 977h5v2h-5zM823 975h8v2h-8zM370 961h4v2h-4zM606 968h5v2h-5zM757 918h8v2h-8zM64 907h4v2h-4zM33 918h5v2h-5zM200 900h8v2h-8zM356 895h8v2h-8zM634 949h5v2h-5zM196 914h5v2h-5zM72 942h8v2h-8zM260 909h5v2h-5zM838 915h5v2h-5zM688 925h4v2h-4zM352 991h5v2h-5zM323 902h4v2h-4zM689 953h8v2h-8zM159 910h5v2h-5zM298 953h5v2h-5zM746 915h4v2h-4zM205 986h4v2h-4zM588 924h4v2h-4zM632 946h5v2h-5zM696 934h5v2h-5zM68 988h8v2h-8zM167 994h5v2h-5zM179 981h5v2h-5zM44 977h10v2h-10zM277 895h8v2h-8zM62 952h8v2h-8zM173 900h4v2h-4zM96 986h4v2h-4zM242 997h8v2h-8zM94 955h4v2h-4zM699 926h4v2h-4zM61 901h5v2h-5zM655 901h4v2h-4zM199 917h10v2h-10zM655 946h5v2h-5zM321 996h4v2h-4zM88 964h5v2h-5zM612 904h5v2h-5zM639 897h8v2h-8zM135 987h4v2h-4zM774 934h8v2h-8zM846 923h10v2h-10zM118 912h5v2h-5zM790 928h8v2h-8z" fill="#1a3cc0"/><path d="M320 911h5v2h-5zM250 984h4v2h-4zM817 949h10v2h-10zM682 926h5v2h-5zM62 958h5v2h-5zM49 985h5v2h-5zM815 931h5v2h-5zM100 904h8v2h-8zM787 935h8v2h-8zM770 993h10v2h-10zM0 931h5v2h-5zM588 898h8v2h-8zM146 999h4v2h-4zM745 901h8v2h-8zM274 908h8v2h-8zM67 934h5v2h-5zM140 928h8v2h-8zM692 936h5v2h-5zM34 903h10v2h-10zM782 989h10v2h-10zM28 898h4v2h-4zM51 911h5v2h-5zM626 897h5v2h-5zM371 920h5v2h-5zM366 896h5v2h-5zM598 974h5v2h-5zM744 907h5v2h-5zM645 1042h8v2h-8zM783 1046h8v2h-8zM121 1045h5v2h-5zM456 1047h10v2h-10zM49 1042h10v2h-10zM484 1040h4v2h-4zM129 1046h4v2h-4zM212 1040h4v2h-4zM590 1043h8v2h-8zM721 1045h8v2h-8zM283 1043h5v2h-5zM782 1043h5v2h-5zM360 1087h4v2h-4zM632 1095h8v2h-8zM357 1084h5v2h-5zM244 1095h8v2h-8zM38 1083h5v2h-5zM734 1089h5v2h-5zM815 1090h8v2h-8zM699 1095h10v2h-10zM638 1082h5v2h-5zM106 1096h10v2h-10zM600 1099h5v2h-5zM832 1092h4v2h-4zM324 1101h4v2h-4zM624 1089h10v2h-10zM806 1098h10v2h-10zM686 1081h10v2h-10zM150 1093h5v2h-5zM607 1080h10v2h-10zM211 1089h5v2h-5zM79 1080h4v2h-4zM792 1091h10v2h-10zM594 1102h8v2h-8zM314 1080h5v2h-5zM733 1087h4v2h-4zM38 1082h5v2h-5zM359 1102h10v2h-10zM625 1097h5v2h-5zM123 1087h5v2h-5zM804 1097h8v2h-8zM402 1101h8v2h-8zM668 1096h5v2h-5zM693 1349h5v2h-5zM705 1384h10v2h-10zM704 1362h5v2h-5zM254 1384h4v2h-4zM217 1308h5v2h-5zM816 1305h10v2h-10zM79 1385h5v2h-5zM78 1351h8v2h-8zM784 1294h5v2h-5zM671 1279h10v2h-10zM655 1383h10v2h-10zM745 1323h8v2h-8zM236 1325h8v2h-8zM250 1309h8v2h-8zM287 1281h10v2h-10zM338 1294h8v2h-8zM31 1290h4v2h-4zM302 1343h10v2h-10zM617 1343h5v2h-5zM608 1284h5v2h-5zM746 1280h4v2h-4zM531 1311h5v2h-5zM234 1385h10v2h-10zM816 1332h4v2h-4zM1 1295h5v2h-5zM114 1282h5v2h-5zM155 1318h10v2h-10zM778 1284h10v2h-10zM776 1327h5v2h-5zM835 1369h5v2h-5zM730 1385h10v2h-10zM594 1351h4v2h-4zM374 1284h4v2h-4zM200 1297h5v2h-5zM696 1366h4v2h-4zM251 1322h10v2h-10zM120 1347h5v2h-5zM135 1358h4v2h-4zM350 1366h4v2h-4zM738 1362h5v2h-5zM16 1285h8v2h-8zM362 1367h5v2h-5zM351 1319h5v2h-5zM297 1386h8v2h-8zM657 1360h4v2h-4zM589 1285h5v2h-5zM64 1337h8v2h-8zM51 1299h8v2h-8zM243 1305h4v2h-4zM149 1305h4v2h-4zM184 1340h8v2h-8zM250 1282h8v2h-8zM364 1287h4v2h-4zM5 1375h5v2h-5zM369 1374h4v2h-4zM21 1303h10v2h-10zM469 1382h10v2h-10zM80 1277h5v2h-5zM198 1373h8v2h-8zM12 1331h10v2h-10zM87 1306h10v2h-10zM703 1331h10v2h-10zM23 1277h5v2h-5zM607 1386h10v2h-10zM651 1346h4v2h-4zM220 1274h8v2h-8zM788 1363h8v2h-8zM831 1382h8v2h-8zM835 1367h5v2h-5zM346 1289h5v2h-5zM799 1295h8v2h-8zM78 1318h5v2h-5zM277 1288h8v2h-8zM372 1307h4v2h-4zM682 1352h4v2h-4zM787 1292h8v2h-8zM78 1280h8v2h-8zM36 1385h8v2h-8zM153 1296h4v2h-4zM765 1377h8v2h-8zM325 1347h8v2h-8zM139 1330h5v2h-5zM79 1317h10v2h-10zM31 1272h5v2h-5zM831 1325h4v2h-4zM273 1287h5v2h-5zM342 1370h5v2h-5zM155 1308h10v2h-10zM718 1342h4v2h-4zM290 1285h4v2h-4zM658 1322h5v2h-5zM310 1318h8v2h-8zM246 1343h5v2h-5zM269 1273h10v2h-10zM12 1364h8v2h-8zM136 1301h8v2h-8zM680 1361h4v2h-4zM8 1272h5v2h-5zM733 1349h5v2h-5zM811 1310h4v2h-4zM823 1335h5v2h-5zM39 1359h8v2h-8zM354 1370h4v2h-4zM126 1386h5v2h-5zM582 1338h5v2h-5zM730 1345h10v2h-10zM399 1309h5v2h-5zM605 1358h4v2h-4zM660 1328h4v2h-4zM753 1298h10v2h-10zM634 1320h4v2h-4zM359 1279h8v2h-8zM3 1343h10v2h-10zM212 1343h8v2h-8zM43 1278h4v2h-4zM119 1314h5v2h-5zM383 1304h5v2h-5zM758 1286h5v2h-5zM257 1377h4v2h-4zM640 1303h8v2h-8zM170 1351h5v2h-5zM718 1304h10v2h-10zM449 1378h5v2h-5zM608 1288h10v2h-10zM53 1386h5v2h-5zM843 1349h8v2h-8zM690 1382h4v2h-4zM26 1346h8v2h-8zM120 1323h10v2h-10zM625 1327h10v2h-10zM590 1299h10v2h-10zM712 1285h4v2h-4zM736 1358h10v2h-10zM95 1276h4v2h-4zM732 1329h5v2h-5zM664 1338h10v2h-10zM738 1378h4v2h-4zM658 1358h5v2h-5zM123 1322h5v2h-5zM264 1329h5v2h-5zM306 1271h5v2h-5zM159 1354h5v2h-5zM269 1311h10v2h-10zM210 1329h4v2h-4zM153 1316h4v2h-4zM655 1325h8v2h-8zM636 1337h8v2h-8zM179 1296h5v2h-5zM587 1315h4v2h-4zM148 1326h5v2h-5z" fill="#3a70ee" opacity=".9"/><rect x="0" y="836" width="852" height="1" fill="#c8c878" opacity=".8"/><rect x="0" y="1212" width="852" height="1" fill="#c8c878" opacity=".8"/></svg><div class="a" style="left:853px;top:81px;width:423px;height:1326px;background:#efefef"></div><div class="t" style="left:862px;top:84.0px;font-size:13px;">Input controls</div><svg class="a" style="left:1249px;top:85px" width="28" height="12"><rect x=".5" y=".5" width="10" height="10" rx="2" fill="none" stroke="#7a7a7a"/><rect x="3" y="4.5" width="4" height="4" fill="none" stroke="#555" stroke-width="1"/><path d="M4.5 4.5V2.8h3.8v3.8H7" fill="none" stroke="#555" stroke-width="1"/>
<rect x="14.5" y=".5" width="10" height="10" rx="2" fill="none" stroke="#7a7a7a"/><path d="M17 3l5 5M22 3l-5 5" stroke="#555" stroke-width="1.6"/></svg><div class="t" style="left:863px;top:112.3px;font-size:12.2px;">LNB LO</div><div class="inp" style="left:910px;top:106px;width:361px;height:24px"></div><div class="a" style="left:1256px;top:107px;width:1px;height:22px;background:#d0d0d0"></div><svg class="a" style="left:1258.5px;top:109.0px" width="10" height="18"><path d="M1.5 7.5h7l-3.5-4z M1.5 10.5h7l-3.5 4z" fill="#5a5a5a"/></svg><div class="t" style="left:1100px;width:149px;text-align:right;top:111px;font-size:13px">0.000000 MHz</div><div class="cb" style="left:863px;top:140px;width:14px;height:14px"></div><div class="t" style="left:882px;top:140.5px;font-size:13px;">Hardware AGC</div><div class="t" style="left:863px;top:165.9px;font-size:13px;">Automatic</div><div class="a" style="left:930px;top:170px;width:289px;height:5px;border-radius:3px;background:#d9d9d9;border:1px solid #c4c4c4"></div><div class="a" style="left:930px;top:170px;width:65px;height:5px;border-radius:3px;background:#3daee9;border:1px solid #2a8ac0"></div><div class="a" style="left:989px;top:166px;width:14px;height:13px;border-radius:3px;background:linear-gradient(#fdfdfd,#efefef);border:1px solid #b5b5b5"></div><div class="t" style="left:1225px;top:165.9px;font-size:13px;">22.0 dB</div><div class="t" style="left:863px;top:187.9px;font-size:13px;">LNA</div><div class="a" style="left:930px;top:192px;width:289px;height:5px;border-radius:3px;background:#d9d9d9;border:1px solid #c4c4c4"></div><div class="a" style="left:930px;top:192px;width:281px;height:5px;border-radius:3px;background:#3daee9;border:1px solid #2a8ac0"></div><div class="a" style="left:1205px;top:188px;width:14px;height:13px;border-radius:3px;background:linear-gradient(#fdfdfd,#efefef);border:1px solid #b5b5b5"></div><div class="t" style="left:1225px;top:187.9px;font-size:13px;">1.0 dB</div><div class="t" style="left:863px;top:209.9px;font-size:13px;">Baseband</div><div class="a" style="left:930px;top:214px;width:289px;height:5px;border-radius:3px;background:#d9d9d9;border:1px solid #c4c4c4"></div><div class="a" style="left:930px;top:214px;width:281px;height:5px;border-radius:3px;background:#3daee9;border:1px solid #2a8ac0"></div><div class="a" style="left:1205px;top:210px;width:14px;height:13px;border-radius:3px;background:linear-gradient(#fdfdfd,#efefef);border:1px solid #b5b5b5"></div><div class="t" style="left:1225px;top:209.9px;font-size:13px;">59.0 dB</div><div class="t" style="left:863px;top:231.9px;font-size:13px;">Mixer</div><div class="a" style="left:930px;top:236px;width:289px;height:5px;border-radius:3px;background:#d9d9d9;border:1px solid #c4c4c4"></div><div class="a" style="left:930px;top:236px;width:281px;height:5px;border-radius:3px;background:#3daee9;border:1px solid #2a8ac0"></div><div class="a" style="left:1205px;top:232px;width:14px;height:13px;border-radius:3px;background:linear-gradient(#fdfdfd,#efefef);border:1px solid #b5b5b5"></div><div class="t" style="left:1228px;top:231.9px;font-size:13px;">19.0 dB</div><div class="t" style="left:863px;top:253.9px;font-size:13px;">Mixbuffer</div><div class="a" style="left:930px;top:258px;width:289px;height:5px;border-radius:3px;background:#d9d9d9;border:1px solid #c4c4c4"></div><div class="a" style="left:930px;top:258px;width:281px;height:5px;border-radius:3px;background:#3daee9;border:1px solid #2a8ac0"></div><div class="a" style="left:1205px;top:254px;width:14px;height:13px;border-radius:3px;background:linear-gradient(#fdfdfd,#efefef);border:1px solid #b5b5b5"></div><div class="t" style="left:1225px;top:253.9px;font-size:13px;">24.0 dB</div><div class="cb" style="left:863px;top:278px;width:14px;height:14px"></div><div class="t" style="left:882px;top:278.5px;font-size:13px;">Swap I/Q</div><div class="cb" style="left:1070px;top:278px;width:14px;height:14px"></div><div class="t" style="left:1089px;top:278.5px;font-size:13px;">No limits</div><div class="cb" style="left:863px;top:306px;width:14px;height:14px"></div><svg class="a" style="left:863px;top:306px" width="14" height="14"><path d="M3 7.5l2.8 3.2L11 3" fill="none" stroke="#1e1e1e" stroke-width="1.6"/></svg><div class="t" style="left:882px;top:306.5px;font-size:13px;">DC remove</div><div class="cb" style="left:1070px;top:306px;width:14px;height:14px"></div><div class="t" style="left:1089px;top:306.5px;font-size:13px;">IQ balance</div><div class="t" style="left:863px;top:336.9px;font-size:13px;">Freq. correction</div><div class="inp" style="left:957px;top:332px;width:314px;height:23px"></div><div class="a" style="left:1256px;top:333px;width:1px;height:21px;background:#d0d0d0"></div><svg class="a" style="left:1258.5px;top:334.5px" width="10" height="18"><path d="M1.5 7.5h7l-3.5-4z M1.5 10.5h7l-3.5 4z" fill="#5a5a5a"/></svg><div class="t" style="left:962px;top:336.9px;font-size:13px;">0.0 ppm</div><div class="t" style="left:863px;top:367.1px;font-size:13px;">Antenna</div><div class="btn" style="left:957px;top:362px;width:314px;height:24px;border-color:#bcbcbc;background:linear-gradient(#fcfcfc,#f2f2f2)"></div><div class="t" style="left:962px;top:367.1px;font-size:13px;">RX</div><svg class="a" style="left:1254px;top:370px" width="10" height="6"><path d="M1 1h8l-4 4z" fill="#444"/></svg><div class="a" style="left:863px;top:392px;width:408px;height:1px;background:#c4c4c4"></div><div class="cb" style="left:863px;top:403px;width:14px;height:14px"></div><div class="t" style="left:882px;top:403.5px;font-size:13px;">Reset frequency controller digits</div><div class="cb" style="left:863px;top:431px;width:14px;height:14px"></div><div class="t" style="left:882px;top:431.5px;font-size:13px;">Invert scroll wheel direction</div><div class="a" style="left:858px;top:930px;width:413px;height:1px;background:#c6c6c6"></div><div class="a" style="left:962px;top:930px;width:121px;height:25px;background:#e0e0e0;border:1px solid #c2c2c2;border-top-left-radius:3px;border-top-right-radius:3px"></div><div class="a" style="left:1082px;top:930px;width:92px;height:25px;background:#e0e0e0;border:1px solid #c2c2c2;border-top-left-radius:3px;border-top-right-radius:3px"></div><div class="a" style="left:858px;top:930px;width:105px;height:27px;background:#f7f7f7;border:1px solid #c2c2c2;border-top:none;border-bottom-left-radius:3px;border-bottom-right-radius:3px"></div><div class="t" style="left:858px;width:105px;text-align:center;top:936px;font-size:13px">Input controls</div><div class="t" style="left:962px;width:121px;text-align:center;top:935px;font-size:13px">Receiver Options</div><div class="t" style="left:1082px;width:92px;text-align:center;top:935px;font-size:13px">FFT Settings</div><svg class="a" style="left:1060px;top:959px" width="18" height="2"><rect x="0" y="0" width="1" height="1" fill="#a0a0a0"/><rect x="3" y="0" width="1" height="1" fill="#a0a0a0"/><rect x="6" y="0" width="1" height="1" fill="#a0a0a0"/><rect x="9" y="0" width="1" height="1" fill="#a0a0a0"/><rect x="12" y="0" width="1" height="1" fill="#a0a0a0"/><rect x="15" y="0" width="1" height="1" fill="#a0a0a0"/></svg><div class="t" style="left:862px;top:967.1px;font-size:13px;">Audio</div><svg class="a" style="left:1249px;top:968px" width="28" height="12"><rect x=".5" y=".5" width="10" height="10" rx="2" fill="none" stroke="#7a7a7a"/><rect x="3" y="4.5" width="4" height="4" fill="none" stroke="#555" stroke-width="1"/><path d="M4.5 4.5V2.8h3.8v3.8H7" fill="none" stroke="#555" stroke-width="1"/>
<rect x="14.5" y=".5" width="10" height="10" rx="2" fill="none" stroke="#7a7a7a"/><path d="M17 3l5 5M22 3l-5 5" stroke="#555" stroke-width="1.6"/></svg><div class="a" style="left:867px;top:992px;width:400px;height:305px;background:#1f1d1e"></div><svg class="a" style="left:867px;top:992px" width="400" height="305" viewBox="867 992 400 305"><path d="M910 1069.5H1267M910 1145.5H1267M910 1221.5H1267M933.5 992V1270M1000.5 992V1270M1067.5 992V1270M1133.5 992V1270M1200.5 992V1270" stroke="#5a5a5a" stroke-dasharray="1 3" fill="none"/><path d="M867.0 1219 L869.5 1280 L871.5 1212 L874.0 1215 L876.5 1206 L879.0 1263 L880.5 1199 L882.0 1201 L884.5 1199 L887.0 1275 L889.0 1193 L891.5 1236 L894.0 1167 L896.5 1185 L898.0 1167 L899.5 1223 L901.5 1165 L904.0 1243 L906.5 1156 L908.5 1205 L911.0 1145 L913.5 1182 L916.0 1163 L917.5 1216 L919.5 1152 L922.0 1177 L923.5 1147 L925.0 1186 L927.0 1142 L928.5 1229 L930.0 1137 L931.5 1192 L934.0 1142 L935.5 1201 L937.0 1153 L939.0 1181 L941.0 1140 L943.0 1219 L944.5 1135 L947.0 1164 L948.5 1144 L950.5 1169 L953.0 1136 L955.5 1170 L958.0 1153 L960.0 1208 L961.5 1142 L963.0 1160 L965.5 1140 L967.0 1171 L969.0 1159 L971.5 1208 L973.0 1132 L974.5 1171 L976.5 1131 L979.0 1180 L981.0 1142 L982.5 1164 L985.0 1149 L986.5 1204 L988.5 1148 L990.0 1241 L992.0 1154 L993.5 1231 L995.0 1149 L997.0 1235 L999.5 1138 L1001.0 1168 L1003.5 1157 L1005.0 1212 L1007.0 1156 L1009.5 1163 L1011.0 1134 L1012.5 1196 L1014.5 1138 L1017.0 1185 L1019.0 1154 L1021.5 1194 L1024.0 1136 L1026.5 1242 L1028.0 1137 L1030.5 1209 L1033.0 1148 L1035.0 1171 L1036.5 1152 L1038.0 1175 L1040.0 1138 L1041.5 1169 L1043.5 1146 L1045.0 1164 L1046.5 1156 L1048.5 1209 L1051.0 1146 L1052.5 1203 L1054.0 1144 L1056.0 1214 L1057.5 1132 L1060.0 1163 L1061.5 1151 L1063.5 1166 L1065.0 1133 L1067.5 1183 L1069.0 1156 L1071.5 1217 L1073.0 1153 L1075.0 1182 L1077.5 1144 L1079.0 1231 L1081.0 1157 L1082.5 1230 L1085.0 1131 L1087.5 1184 L1090.0 1131 L1091.5 1163 L1094.0 1134 L1096.0 1232 L1098.5 1140 L1101.0 1213 L1103.0 1143 L1105.5 1163 L1108.0 1132 L1110.5 1164 L1112.0 1137 L1114.5 1165 L1117.0 1149 L1119.0 1174 L1120.5 1141 L1122.0 1211 L1123.5 1146 L1125.5 1210 L1127.5 1145 L1129.0 1180 L1131.5 1138 L1134.0 1188 L1135.5 1156 L1137.5 1172 L1139.5 1137 L1141.0 1194 L1142.5 1151 L1144.5 1226 L1146.0 1144 L1148.0 1237 L1150.0 1142 L1152.5 1194 L1154.5 1151 L1157.0 1190 L1158.5 1154 L1160.5 1231 L1162.0 1150 L1164.0 1201 L1166.0 1149 L1168.5 1160 L1170.0 1142 L1171.5 1161 L1173.5 1138 L1175.0 1223 L1177.5 1134 L1179.0 1207 L1181.5 1149 L1183.5 1240 L1186.0 1137 L1188.0 1174 L1190.5 1131 L1192.5 1198 L1194.0 1136 L1196.0 1221 L1198.5 1151 L1201.0 1195 L1202.5 1142 L1205.0 1235 L1206.5 1142 L1209.0 1185 L1211.0 1144 L1213.5 1233 L1215.0 1142 L1217.5 1209 L1220.0 1153 L1222.0 1191 L1224.5 1159 L1226.0 1216 L1228.5 1157 L1230.0 1171 L1232.0 1158 L1234.0 1198 L1236.0 1138 L1238.5 1229 L1240.5 1145 L1242.0 1189 L1244.5 1143 L1246.5 1193 L1248.0 1137 L1249.5 1188 L1251.0 1136 L1253.0 1212 L1254.5 1157 L1257.0 1258 L1259.5 1210 L1262.0 1243 L1264.0 1241 L1266.5 1245" fill="none" stroke="#ffffff" stroke-width="1"/></svg><div class="t" style="left:878px;top:1062.6px;font-size:12px;color:#cfcfcf">-20</div><div class="t" style="left:878px;top:1138.8px;font-size:12px;color:#cfcfcf">-40</div><div class="t" style="left:878px;top:1214.3px;font-size:12px;color:#cfcfcf">-60</div><div class="t" style="left:913px;width:40px;text-align:center;top:1277px;font-size:12px;color:#cfcfcf">0.5</div><div class="t" style="left:980px;width:40px;text-align:center;top:1277px;font-size:12px;color:#cfcfcf">1.0</div><div class="t" style="left:1047px;width:40px;text-align:center;top:1277px;font-size:12px;color:#cfcfcf">1.5</div><div class="t" style="left:1113px;width:40px;text-align:center;top:1277px;font-size:12px;color:#cfcfcf">2.0</div><div class="t" style="left:1180px;width:40px;text-align:center;top:1277px;font-size:12px;color:#cfcfcf">2.5</div><div class="t" style="left:1258px;top:1277px;font-size:12px;color:#cfcfcf">3</div><div class="t" style="left:867px;top:1307.7px;font-size:13px;">Gain:</div><div class="a" style="left:904px;top:1312px;width:315px;height:5px;border-radius:3px;background:#d9d9d9;border:1px solid #c4c4c4"></div><div class="a" style="left:904px;top:1312px;width:194px;height:5px;border-radius:3px;background:#3daee9;border:1px solid #2a8ac0"></div><div class="a" style="left:1092px;top:1308px;width:14px;height:13px;border-radius:3px;background:linear-gradient(#fdfdfd,#efefef);border:1px solid #b5b5b5"></div><div class="t" style="left:1232px;top:1307.7px;font-size:13px;">1.1 dB</div><div class="btn" style="left:867px;top:1331px;width:79px;height:25px;line-height:23px;font-size:13px;color:#232323">Mute</div><div class="btn" style="left:948px;top:1331px;width:79px;height:25px;line-height:23px;font-size:13px;color:#232323">UDP</div><div class="btn" style="left:1028px;top:1331px;width:79px;height:25px;line-height:23px;font-size:13px;color:#232323">Rec</div><div class="btn" style="left:1108px;top:1331px;width:79px;height:25px;line-height:23px;font-size:13px;color:#b0b0b0">Play</div><div class="btn" style="left:1188px;top:1331px;width:79px;height:25px;line-height:23px;font-size:13px;color:#232323">...</div><div class="t" style="left:1027px;width:80px;text-align:center;top:1363px;font-size:12.5px;font-style:italic">DSP</div><div class="a" style="left:0px;top:1388px;width:853px;height:19px;background:#efefef"></div><div class="a" style="left:1260px;top:0px;width:16px;height:1407px;background:linear-gradient(90deg,rgba(0,0,0,0),rgba(0,0,0,.13))"></div><svg class="a" style="left:855px;top:727px" width="2" height="20"><rect x="0" y="0" width="1" height="1" fill="#a8a8a8"/><rect x="0" y="3" width="1" height="1" fill="#a8a8a8"/><rect x="0" y="6" width="1" height="1" fill="#a8a8a8"/><rect x="0" y="9" width="1" height="1" fill="#a8a8a8"/><rect x="0" y="12" width="1" height="1" fill="#a8a8a8"/><rect x="0" y="15" width="1" height="1" fill="#a8a8a8"/></svg><div class="a" style="left:1276px;top:0px;width:2px;height:1407px;background:#6c6c6c"></div><div class="a" style="left:1278px;top:0px;width:1272px;height:20px;background:linear-gradient(#e9e9e9,#d3d3d3)"></div><svg class="a" style="left:1286px;top:6px" width="12" height="8"><path d="M1 1h10l-5 5z" fill="#6a6a6a"/></svg><div class="t" style="left:1800px;top:4px;font-size:12.5px;font-weight:bold;color:#5c5c5c">WSJT-X &nbsp;v2.7.0-rc2 &nbsp;by K1JT et al.</div><svg class="a" style="left:2488px;top:3px" width="62" height="14"><path d="M4 7h9" stroke="#5a5a5a" stroke-width="2"/><path d="M26 7h9M30.5 2.5v9" stroke="#5a5a5a" stroke-width="2"/><path d="M48 3l8 8M56 3l-8 8" stroke="#5a5a5a" stroke-width="2"/></svg><div class="a" style="left:1278px;top:20px;width:1272px;height:21px;background:#efefef"></div><div class="a" style="left:1278px;top:41px;width:1272px;height:1px;background:#d6d6d6"></div><div class="t" style="left:1288px;top:24px;font-size:13.2px">File</div><div class="t" style="left:1322px;top:24px;font-size:13.2px">Configurations</div><div class="t" style="left:1421px;top:24px;font-size:13.2px">View</div><div class="t" style="left:1462px;top:24px;font-size:13.2px">Mode</div><div class="t" style="left:1509px;top:24px;font-size:13.2px">Decode</div><div class="t" style="left:1566px;top:24px;font-size:13.2px">Save</div><div class="t" style="left:1607px;top:24px;font-size:13.2px">Tools</div><div class="t" style="left:1652px;top:24px;font-size:13.2px">Help</div><div class="t" style="left:1439px;width:200px;text-align:center;top:54px;font-size:13px">Band Activity</div><div class="t" style="left:2132px;width:200px;text-align:center;top:54px;font-size:13px">Rx Frequency</div><div class="a" style="left:1289px;top:76px;width:626px;height:20px;background:#ababab"></div><div class="a" style="left:1919px;top:76px;width:626px;height:20px;background:#ababab"></div><div class="t mono" style="left:1294.5px;top:80px;font-size:13px;color:#3a3a3a">&nbsp;&nbsp;UTC&nbsp;&nbsp;&nbsp;dB&nbsp;&nbsp;&nbsp;DT&nbsp;Freq&nbsp;&nbsp;&nbsp;&nbsp;Message</div><div class="t mono" style="left:1924px;top:80px;font-size:13px;color:#3a3a3a">&nbsp;&nbsp;UTC&nbsp;&nbsp;&nbsp;dB&nbsp;&nbsp;&nbsp;DT&nbsp;Freq&nbsp;&nbsp;&nbsp;&nbsp;Message</div><div class="a" style="left:1289px;top:102px;width:626px;height:999px;background:#fff;border:1px solid #a9a9a9"></div><div class="a" style="left:1919px;top:102px;width:626px;height:999px;background:#fff;border:1px solid #a9a9a9"></div><div class="a" style="left:1294px;top:107px;width:602px;height:864px;background:#6aff6a"></div><div class="a mono" style="left:1294.5px;top:107px;font-size:12.9px;line-height:16px;white-space:pre;color:#303030">191530 -17  0.5 2574 ~  CQ 051
191530 -17  0.5 2674 ~  CQ 053
191530 -17  0.5  674 ~  CQ 013
191530 -16  0.5 2624 ~  CQ 052
191530 -18  0.5  824 ~  CQ 016
191530 -18  0.5 2374 ~  CQ 047
191530 -17  0.5  874 ~  CQ 017
191530 -17  0.5 1124 ~  CQ 022
191530 -17  0.5 2424 ~  CQ 048
191530 -16  0.5 1274 ~  CQ 025
191530 -18  0.5 2224 ~  CQ 044
191530 -18  0.5  774 ~  CQ 015
191530 -17  0.5 1974 ~  CQ 039
191530 -17  0.5 2524 ~  CQ 050
191530 -18  0.5 2274 ~  CQ 045
191530 -17  0.5 2074 ~  CQ 041
191530 -16  0.5 1324 ~  CQ 026
191530 -18  0.5 2024 ~  CQ 040
191530 -17  0.5 2724 ~  CQ 054
191530 -16  0.5 1824 ~  CQ 036
191530 -17  0.5  724 ~  CQ 014
191530 -16  0.5 1224 ~  CQ 024
191530 -17  0.5  324 ~  CQ 006
191530 -17  0.5  374 ~  CQ 007
191530 -16  0.5 1174 ~  CQ 023
191530 -17  0.5  474 ~  CQ 009
191530 -18  0.5 2324 ~  CQ 046
191530 -17  0.5 2474 ~  CQ 049
191530 -17  0.5  624 ~  CQ 012
191530 -17  0.5  424 ~  CQ 008
191530 -17  0.5 1924 ~  CQ 038
191530 -17  0.5 2824 ~  CQ 056
191530 -17  0.5 2774 ~  CQ 055
191530 -17  0.5  924 ~  CQ 018
191530 -16  0.5 1774 ~  CQ 035
191530 -16  0.5 1424 ~  CQ 028
191530 -18  0.5 2124 ~  CQ 042
191530 -16  0.5 1074 ~  CQ 021
191530 -17  0.5 1874 ~  CQ 037
191530 -18  0.5 2174 ~  CQ 043
191530 -17  0.5  524 ~  CQ 010
191530 -16  0.5 1474 ~  CQ 029
191530 -17  0.5  574 ~  CQ 011
191530 -17  0.5  974 ~  CQ 019
191530 -16  0.5 1724 ~  CQ 034
191530 -17  0.5 1024 ~  CQ 020
191530 -19  0.5 2874 ~  CQ 057
191530 -18  0.5  273 ~  CQ 005
191530 -16  0.5 1624 ~  CQ 032
191530 -16  0.5 1574 ~  CQ 031
191530 -19  0.5  223 ~  CQ 004
191530 -21  0.5 2924 ~  CQ 058
191530 -16  0.5 2974 ~  CQ 059
191530 -11  0.5 1374 ~  CQ 027</div><div class="a" style="left:1900px;top:103px;width:15px;height:997px;background:linear-gradient(90deg,#ececec,#f8f8f8);border-left:1px solid #b8b8b8"></div><div class="a" style="left:1901px;top:116px;width:14px;height:1px;background:#c8c8c8"></div><div class="a" style="left:1901px;top:1086px;width:14px;height:1px;background:#c8c8c8"></div><svg class="a" style="left:1903px;top:106px" width="10" height="8"><path d="M1 6h8l-4-4z" fill="#4a4a4a"/></svg><svg class="a" style="left:1903px;top:1090px" width="10" height="8"><path d="M1 2h8l-4 4z" fill="#4a4a4a"/></svg><div class="a" style="left:2529px;top:103px;width:15px;height:997px;background:linear-gradient(90deg,#ececec,#f8f8f8);border-left:1px solid #b8b8b8"></div><div class="a" style="left:2530px;top:116px;width:14px;height:1px;background:#c8c8c8"></div><div class="a" style="left:2530px;top:1086px;width:14px;height:1px;background:#c8c8c8"></div><svg class="a" style="left:2532px;top:106px" width="10" height="8"><path d="M1 6h8l-4-4z" fill="#4a4a4a"/></svg><svg class="a" style="left:2532px;top:1090px" width="10" height="8"><path d="M1 2h8l-4 4z" fill="#4a4a4a"/></svg><div class="cb" style="left:1289px;top:1112px;width:14px;height:14px"></div><div class="t" style="left:1308px;top:1112.5px;font-size:13px;">CQ only</div><div class="btn" style="left:1365px;top:1107px;width:132px;height:25px;line-height:23px;font-size:13px;">Log <u style="text-decoration-thickness:1px;text-underline-offset:2px">Q</u>SO</div><div class="btn" style="left:1504px;top:1107px;width:132px;height:25px;line-height:23px;font-size:13px;"><u style="text-decoration-thickness:1px;text-underline-offset:2px">S</u>top</div><div class="btn" style="left:1643px;top:1107px;width:134px;height:25px;line-height:23px;font-size:13px;background:#00ee00;border:1px solid #1a1a1a;border-radius:4px"><u style="text-decoration-thickness:1px;text-underline-offset:2px">M</u>onitor</div><div class="btn" style="left:1783px;top:1107px;width:132px;height:25px;line-height:23px;font-size:13px;"><u style="text-decoration-thickness:1px;text-underline-offset:2px">E</u>rase</div><div class="btn" style="left:1922px;top:1107px;width:133px;height:25px;line-height:23px;font-size:13px;"><u style="text-decoration-thickness:1px;text-underline-offset:2px">D</u>ecode</div><div class="btn" style="left:2061px;top:1107px;width:133px;height:25px;line-height:23px;font-size:13px;">E<u style="text-decoration-thickness:1px;text-underline-offset:2px">n</u>able Tx</div><div class="btn" style="left:2200px;top:1107px;width:132px;height:25px;line-height:23px;font-size:13px;"><u style="text-decoration-thickness:1px;text-underline-offset:2px">H</u>alt Tx</div><div class="btn" style="left:2339px;top:1107px;width:132px;height:25px;line-height:23px;font-size:13px;"><u style="text-decoration-thickness:1px;text-underline-offset:2px">T</u>une</div><div class="cb" style="left:2478px;top:1112px;width:14px;height:14px"></div><svg class="a" style="left:2478px;top:1112px" width="14" height="14"><path d="M3 7.5l2.8 3.2L11 3" fill="none" stroke="#1e1e1e" stroke-width="1.6"/></svg><div class="t" style="left:2498px;top:1112.5px;font-size:13px;">Menus</div><div class="btn" style="left:1289px;top:1144px;width:76px;height:25px;background:linear-gradient(#fcfcfc,#f2f2f2)"></div><div class="a" style="left:1345px;top:1145px;width:1px;height:23px;background:#d0d0d0"></div><div class="t" style="left:1294px;top:1149.5px;font-size:13px;">10m</div><svg class="a" style="left:1350px;top:1153px" width="10" height="6"><path d="M1 1h8l-4 4z" fill="#444"/></svg><div class="a" style="left:1372px;top:1145px;width:22px;height:22px;border-radius:50%;background:#00dd00;border:1px solid #7ab87a"></div><div class="a" style="left:1400px;top:1139px;width:317px;height:35px;background:#000"></div><div class="t" style="left:1400px;width:317px;text-align:center;top:1144px;font-size:22px;color:#ffff00;letter-spacing:.5px">28.074 000</div><div class="a" style="left:1289px;top:1181px;width:58px;height:194px;border-left:1px solid #cfcfcf;border-top:1px solid #cfcfcf;border-right:1px solid #fafafa;border-bottom:1px solid #fafafa"></div><div class="a" style="left:1300px;top:1212px;width:10px;height:127px;background:#ff0000"></div><svg class="a" style="left:1298px;top:1195px" width="40" height="150"><path d="M12.5 2V144M12.5 144.0h4M12.5 128.3h4M12.5 112.6h4M12.5 96.9h4M12.5 81.2h4M12.5 65.5h4M12.5 49.8h4M12.5 34.1h4M12.5 18.4h4M12.5 2h4" stroke="#1e1e1e" stroke-width="1" fill="none"/><path d="M2 10l10 5.5h-10z" fill="#111"/></svg><div class="t" style="left:1315px;top:1207.2px;font-size:12.5px;">80</div><div class="t" style="left:1315px;top:1238.8px;font-size:12.5px;">60</div><div class="t" style="left:1315px;top:1270.2px;font-size:12.5px;">40</div><div class="t" style="left:1315px;top:1301.3px;font-size:12.5px;">20</div><div class="t" style="left:1315px;top:1333.0px;font-size:12.5px;">0</div><div class="t" style="left:1289px;width:58px;text-align:center;top:1351px;font-size:13px">81 dB</div><div class="btn" style="left:1354px;top:1184px;width:40px;height:24px;line-height:22px;font-size:13px;">H</div><div class="btn" style="left:1354px;top:1217px;width:40px;height:24px;line-height:22px;font-size:13px;">FT8</div><div class="btn" style="left:1354px;top:1250px;width:40px;height:24px;line-height:22px;font-size:13px;">FT4</div><div class="btn" style="left:1354px;top:1283px;width:40px;height:24px;line-height:22px;font-size:13px;">MSK</div><div class="btn" style="left:1354px;top:1316px;width:40px;height:24px;line-height:22px;font-size:13px;">Q65</div><div class="btn" style="left:1354px;top:1349px;width:40px;height:24px;line-height:22px;font-size:13px;">JT65</div><div class="a" style="left:1400px;top:1185px;width:207px;height:27px;background:#9daedb"></div><div class="a" style="left:1613px;top:1185px;width:104px;height:27px;background:#9daedb"></div><div class="t" style="left:1400px;width:207px;text-align:center;top:1192px;font-size:13px">DX Call</div><div class="t" style="left:1613px;width:104px;text-align:center;top:1192px;font-size:13px">DX Grid</div><div class="inp" style="left:1400px;top:1218px;width:207px;height:25px"></div><div class="inp" style="left:1613px;top:1218px;width:104px;height:25px"></div><div class="btn" style="left:1400px;top:1271px;width:156px;height:25px;line-height:23px;font-size:13px;"><u style="text-decoration-thickness:1px;text-underline-offset:2px">L</u>ookup</div><div class="btn" style="left:1562px;top:1271px;width:155px;height:25px;line-height:23px;font-size:13px;">Add</div><div class="a" style="left:1400px;top:1311px;width:317px;height:61px;background:#000"></div><div class="t" style="left:1400px;width:317px;text-align:center;top:1317px;font-size:22px;line-height:24px;color:#ffff00;letter-spacing:.5px">2023 Oct 03<br>19:15:55</div><div class="cb" style="left:1723px;top:1143px;width:14px;height:14px"></div><svg class="a" style="left:1723px;top:1143px" width="14" height="14"><path d="M3 7.5l2.8 3.2L11 3" fill="none" stroke="#1e1e1e" stroke-width="1.6"/></svg><div class="t" style="left:1742px;top:1143.0px;font-size:13px;">Tx even/1st</div><div class="cb" style="left:1824px;top:1143px;width:14px;height:14px"></div><div class="t" style="left:1843px;top:1143.0px;font-size:13px;">Hold Tx Freq</div><div class="inp" style="left:1723px;top:1169px;width:95px;height:22px"></div><div class="a" style="left:1803px;top:1170px;width:1px;height:20px;background:#d0d0d0"></div><svg class="a" style="left:1806px;top:1171.0px" width="10" height="18"><path d="M1.5 7.5h7l-3.5-4z M1.5 10.5h7l-3.5 4z" fill="#5a5a5a"/></svg><div class="t" style="left:1723px;width:80px;text-align:center;top:1173.5px;font-size:13px">Tx&nbsp; 1500&nbsp; Hz</div><div class="btn" style="left:1729px;top:1198px;width:35px;height:25px;line-height:23px;font-size:13px;"></div><svg class="a" style="left:1740px;top:1205px" width="14" height="12"><path d="M1 10.5h11l-5.5-9z" fill="#111"/></svg><div class="btn" style="left:1776px;top:1198px;width:35px;height:25px;line-height:23px;font-size:13px;"></div><svg class="a" style="left:1787px;top:1205px" width="14" height="12"><path d="M1 1.5h11l-5.5 9z" fill="#111"/></svg><div class="inp" style="left:1723px;top:1230px;width:95px;height:23px"></div><div class="a" style="left:1803px;top:1231px;width:1px;height:21px;background:#d0d0d0"></div><svg class="a" style="left:1806px;top:1232.5px" width="10" height="18"><path d="M1.5 7.5h7l-3.5-4z M1.5 10.5h7l-3.5 4z" fill="#5a5a5a"/></svg><div class="t" style="left:1723px;width:80px;text-align:center;top:1235.0px;font-size:13px">Rx&nbsp; 1255&nbsp; Hz</div><div class="inp" style="left:1723px;top:1262px;width:95px;height:22px"></div><div class="a" style="left:1803px;top:1263px;width:1px;height:20px;background:#d0d0d0"></div><svg class="a" style="left:1806px;top:1264.0px" width="10" height="18"><path d="M1.5 7.5h7l-3.5-4z M1.5 10.5h7l-3.5 4z" fill="#5a5a5a"/></svg><div class="t" style="left:1723px;width:80px;text-align:center;top:1266.5px;font-size:13px">Report -15</div><div class="cb" style="left:1723px;top:1297px;width:14px;height:14px"></div><svg class="a" style="left:1723px;top:1297px" width="14" height="14"><path d="M3 7.5l2.8 3.2L11 3" fill="none" stroke="#1e1e1e" stroke-width="1.6"/></svg><div class="t" style="left:1742px;top:1297.0px;font-size:13px;">Auto Seq</div><div class="btn" style="left:1857px;top:1291px;width:128px;height:25px;background:linear-gradient(#fcfcfc,#f2f2f2)"></div><div class="t" style="left:1862px;top:1297.0px;font-size:13px;">CQ: None</div><svg class="a" style="left:1968px;top:1300px" width="10" height="6"><path d="M1 1h8l-4 4z" fill="#444"/></svg><div class="a" style="left:2018px;top:1139px;width:496px;height:236px;background:#fafafa;border:1px solid #bfbfbf"></div><div class="a" style="left:2018px;top:1137px;width:2px;height:61px;background:#fafafa"></div><svg class="a" style="left:1988px;top:1136px" width="34" height="66"><path d="M31 2L9 10.5Q4 12.5 4 17V21Q4 25.5 9 27.5L31 32" fill="#fafafa" stroke="#1a1a1a" stroke-width="1.1"/>
<path d="M31 32L9 39.5Q5 41.5 5 46V50Q5 54 9 56L31 62" fill="#efefef" stroke="#1a1a1a" stroke-width="1.1"/>
<text x="0" y="0" transform="translate(18 18) rotate(-90)" text-anchor="middle" dominant-baseline="central" font-size="12" font-family="Liberation Sans" fill="#1a1a1a">1</text>
<text x="0" y="0" transform="translate(19 48) rotate(-90)" text-anchor="middle" dominant-baseline="central" font-size="12" font-family="Liberation Sans" fill="#1a1a1a">2</text></svg><div class="btn" style="left:2031px;top:1151px;width:373px;height:25px;line-height:23px;font-size:13px;">Generate Std Msgs</div><div class="t" style="left:2412px;top:1157.0px;font-size:13px;">Next</div><div class="t" style="left:2460px;top:1157.0px;font-size:13px;">Now</div><div class="inp" style="left:2031px;top:1183px;width:373px;height:24px;border-color:#b9b9b9"></div><div class="a" style="left:2420px;top:1188px;width:14px;height:14px;border-radius:50%;background:#fff;border:1px solid #a8a8a8"></div><div class="btn" style="left:2446px;top:1183px;width:55px;height:24px;line-height:22px;font-size:13px;">Tx <u style="text-decoration-thickness:1px;text-underline-offset:2px">1</u></div><div class="inp" style="left:2031px;top:1214px;width:373px;height:24px;border-color:#b9b9b9"></div><div class="a" style="left:2420px;top:1219px;width:14px;height:14px;border-radius:50%;background:#fff;border:1px solid #a8a8a8"></div><div class="btn" style="left:2446px;top:1214px;width:55px;height:24px;line-height:22px;font-size:13px;">Tx <u style="text-decoration-thickness:1px;text-underline-offset:2px">2</u></div><div class="inp" style="left:2031px;top:1245px;width:373px;height:24px;border-color:#b9b9b9"></div><div class="a" style="left:2420px;top:1250px;width:14px;height:14px;border-radius:50%;background:#fff;border:1px solid #a8a8a8"></div><div class="btn" style="left:2446px;top:1245px;width:55px;height:24px;line-height:22px;font-size:13px;">Tx <u style="text-decoration-thickness:1px;text-underline-offset:2px">3</u></div><div class="inp" style="left:2031px;top:1276px;width:373px;height:24px;border-color:#b9b9b9"></div><div class="a" style="left:2420px;top:1281px;width:14px;height:14px;border-radius:50%;background:#fff;border:1px solid #a8a8a8"></div><div class="btn" style="left:2446px;top:1276px;width:55px;height:24px;line-height:22px;font-size:13px;">Tx <u style="text-decoration-thickness:1px;text-underline-offset:2px">4</u></div><div class="inp" style="left:2031px;top:1306px;width:373px;height:24px;border-color:#b9b9b9"></div><div class="a" style="left:2420px;top:1311px;width:14px;height:14px;border-radius:50%;background:#fff;border:1px solid #a8a8a8"></div><div class="btn" style="left:2446px;top:1306px;width:55px;height:24px;line-height:22px;font-size:13px;">Tx <u style="text-decoration-thickness:1px;text-underline-offset:2px">5</u></div><div class="inp" style="left:2031px;top:1338px;width:373px;height:24px;border-color:#b9b9b9"></div><div class="a" style="left:2420px;top:1343px;width:14px;height:14px;border-radius:50%;background:#fff;border:1px solid #a8a8a8"></div><div class="btn" style="left:2446px;top:1338px;width:55px;height:24px;line-height:22px;font-size:13px;">Tx <u style="text-decoration-thickness:1px;text-underline-offset:2px">6</u></div><div class="a" style="left:2385px;top:1307px;width:1px;height:22px;background:#d0d0d0"></div><svg class="a" style="left:2389px;top:1315px" width="10" height="6"><path d="M1 1h8l-4 4z" fill="#444"/></svg><div class="a" style="left:2424px;top:1345px;width:6px;height:6px;border-radius:50%;background:#333"></div><div class="t" style="left:2035px;top:1343.0px;font-size:13px;">CQ VU3FOE MK68</div><div class="t" style="left:2523px;top:1149.5px;font-size:13px;">Pwr</div><div class="a" style="left:2522px;top:1185px;width:5px;height:187px;background:#dadada;border:1px solid #b8b8b8;border-radius:2px"></div><div class="a" style="left:2518px;top:1182px;width:12px;height:13px;background:linear-gradient(#fdfdfd,#efefef);border:1px solid #b5b5b5;border-radius:3px"></div><svg class="a" style="left:2534px;top:1185px" width="8" height="190"><rect x="0" y="2" width="4" height="1" fill="#3a6fc0"/><rect x="0" y="22" width="4" height="1" fill="#3a6fc0"/><rect x="0" y="42" width="4" height="1" fill="#3a6fc0"/><rect x="0" y="62" width="4" height="1" fill="#3a6fc0"/><rect x="0" y="82" width="4" height="1" fill="#3a6fc0"/><rect x="0" y="102" width="4" height="1" fill="#3a6fc0"/><rect x="0" y="122" width="4" height="1" fill="#3a6fc0"/><rect x="0" y="142" width="4" height="1" fill="#3a6fc0"/><rect x="0" y="162" width="4" height="1" fill="#3a6fc0"/><rect x="0" y="182" width="4" height="1" fill="#3a6fc0"/></svg><div class="a" style="left:1280px;top:1390px;width:100px;height:17px;background:#00ee00;border:1px solid #b0b0b0"></div><div class="t" style="left:1280px;width:100px;text-align:center;top:1393px;font-size:13px">Receiving</div><div class="a" style="left:1386px;top:1390px;width:80px;height:17px;background:#ff6b9c;border:1px solid #b0b0b0"></div><div class="t" style="left:1386px;width:80px;text-align:center;top:1393px;font-size:13px">FT8</div><div class="a" style="left:1472px;top:1390px;width:150px;height:17px;border:1px solid #bdbdbd"></div><div class="a" style="left:1628px;top:1390px;width:29px;height:17px;border:1px solid #bdbdbd"></div><div class="t" style="left:1628px;width:29px;text-align:center;top:1393px;font-size:13px">54</div><div class="a" style="left:2081px;top:1390px;width:403px;height:17px;background:#fff;border:1px solid #b8b8b8;border-radius:3px"></div><div class="a" style="left:2082px;top:1391px;width:267px;height:16px;background:#3daee9;border-radius:2px 0 0 0"></div><div class="t" style="left:2081px;width:403px;text-align:center;top:1393px;font-size:13px;color:#2a2a2a">10/15</div><div class="t" style="left:2490px;top:1393.5px;font-size:13px;">WD:6m</div></body></html>
